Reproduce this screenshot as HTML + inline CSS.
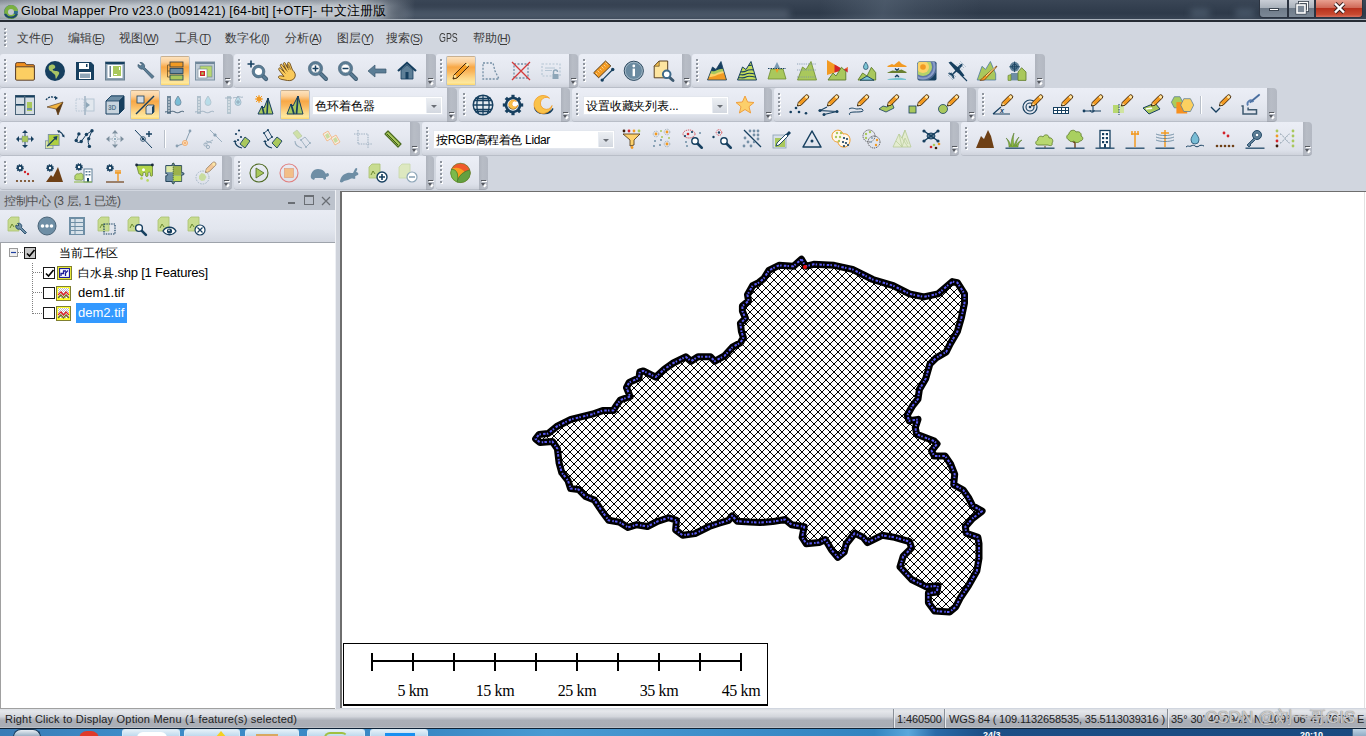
<!DOCTYPE html>
<html><head><meta charset="utf-8"><title>Global Mapper</title>
<style>
*{box-sizing:border-box;margin:0;padding:0}
html,body{width:1366px;height:736px;overflow:hidden}
body{position:relative;background:#d1d6df;font-family:"Liberation Sans",sans-serif;font-size:12px;color:#000}
.abs{position:absolute}
#title{position:absolute;left:0;top:0;width:1366px;height:22px;background:linear-gradient(#3a4656,#2e3a4a 60%,#3c4858)}
#title .glow{position:absolute;left:0;top:0;width:415px;height:20px;background:linear-gradient(90deg,#a9b0b8 0,#bcc2c9 6%,#c0c6cd 50%,#bac0c7 86%,rgba(150,158,168,.7) 93%,rgba(60,72,86,0) 100%)}
#title .glow:after{content:"";position:absolute;left:0;top:0;right:0;bottom:0;background:linear-gradient(rgba(60,70,84,.35),rgba(60,70,84,0) 30%,rgba(60,70,84,0) 80%,rgba(60,70,84,.2))}
#title .blur{position:absolute;top:3px;height:14px;background:rgba(120,140,160,.35);filter:blur(3px);border-radius:4px}
#title .hl{position:absolute;left:0;top:19px;width:1366px;height:1px;background:#aab2bc}
#title .dk{position:absolute;left:0;top:20px;width:1366px;height:2px;background:#262c34}
#title .t{position:absolute;left:21px;top:3px;font-size:12.5px;letter-spacing:0.16px;color:#000;white-space:nowrap;text-shadow:0 0 6px #dfe4ea}
#title .logo{position:absolute;left:2px;top:2px}
.wbtn{position:absolute;top:0;height:18px;border:1px solid #2b3340;border-top:none}
#menu{position:absolute;left:0;top:22px;width:1366px;height:32px;background:#d1d6df}
#menu span{position:absolute;top:8px;font-size:12px;color:#3b3b3b;white-space:nowrap}
#menu s{text-decoration:none;font-size:11px;letter-spacing:-0.88px}
#menu u{text-decoration:none;border-bottom:1px solid #3b3b3b}
.tb{position:absolute;background:linear-gradient(#ebeef6,#e6e9f1 40%,#dde1ea 85%,#cfd3dc);border-radius:3px 0 0 3px;border-bottom:1px solid #b9bec8}
.chev{position:absolute;background:linear-gradient(90deg,#aeb3bd,#b8bdc6 40%,#b3b8c2);border-radius:0 4px 4px 0;border-bottom:1px solid #a2a7b1}
.chev i{position:absolute;left:2px;top:24px;width:5px;height:1px;background:#55595f;box-shadow:1px 1px 0 #fff}
.chev b{position:absolute;left:2px;top:27px;width:0;height:0;border-left:2.5px solid transparent;border-right:2.5px solid transparent;border-top:3px solid #55595f}
.chev s{position:absolute;left:5px;top:28px;width:1.5px;height:3px;background:#fff;transform:rotate(40deg)}
.act{position:absolute;width:30px;height:30px;border:1px solid #b9c2cc;border-top-color:#c8b090;border-radius:2px;background:linear-gradient(#fde2bc,#fbd09a 18%,#f8a846 36%,#f9b65c 52%,#fcd88a 76%,#fde89e 92%,#fdd56a)}
.ic{position:absolute;overflow:visible}
.sep{position:absolute;width:2px;height:18px;border-left:1px solid #b9c0ca;border-right:1px solid #fff}
.combo{position:absolute;background:#fff;border:1px solid #e3e7ee}
.combo span{position:absolute;left:2px;top:1px;font-size:12px;color:#000;white-space:nowrap}
.combo .dd{position:absolute;right:1px;top:1px;width:15px;height:calc(100% - 2px);background:linear-gradient(#eceff3,#d3d8e0);border-left:1px solid #e8ecf2}
.combo .dd i{position:absolute;left:4px;top:7px;border-left:3.5px solid transparent;border-right:3.5px solid transparent;border-top:3.5px solid #6a6f76}
#panelhdr{position:absolute;left:0;top:191px;width:335px;height:19px;background:#bcc2cc}
#panelhdr .t{position:absolute;left:4px;top:2px;font-size:12px;letter-spacing:-0.34px;color:#505050;white-space:nowrap}
#paneltb{position:absolute;left:0;top:210px;width:335px;height:33px;background:linear-gradient(#e9ecf4,#e2e6ee 60%,#d4d8e1);border-bottom:1px solid #9ea3ab}
#tree{position:absolute;left:0;top:243px;width:335px;height:466px;background:#fff;border-left:1px solid #a0a0a0;border-bottom:1px solid #a0a0a0}
#tree .t{position:absolute;font-size:13px;white-space:nowrap;color:#000}
.cb{position:absolute;width:12px;height:12px;border:1px solid #1a1a1a;background:#fff}
#split{position:absolute;left:335px;top:190px;width:5px;height:519px;background:#cfd3db;border-left:1px solid #eef0f4}
#map{position:absolute;left:340px;top:191px;width:1026px;height:517px;background:#fff;border-left:2px solid #6e6e6e;border-top:1px solid #6e6e6e;overflow:hidden}
#map:after{content:"";position:absolute;right:1px;top:0;width:1px;height:100%;background:#e2e2e2}
#status{position:absolute;left:0;top:709px;width:1366px;height:19px;background:linear-gradient(#dcdfe4,#e5e7eb 12%,#d2d5db 40%,#bcc0c8 50%,#abafb7 60%,#a9adb5 92%,#c6cad0)}
#status span{position:absolute;top:4px;font-size:11px;color:#222;white-space:nowrap}
#status .dv{position:absolute;top:0;width:2px;height:19px;border-left:1px solid #8a9098;border-right:1px solid #e8eaee}
#taskbar{position:absolute;left:0;top:728px;width:1366px;height:8px;background:linear-gradient(90deg,#3a7cb6 0,#3e8cc8 9%,#3a88c4 31%,#4a9ad2 40%,#3c8cc8 55%,#3384c0 64%,#5aa8dc 66.5%,#2a6aa8 68.5%,#1c4e86 72%,#1a4a80 100%);border-top:1px solid #0e2236}
.tbtn{position:absolute;top:0;height:8px;border:1px solid #d8eaf6;border-bottom:none;border-radius:3px 3px 0 0;background:linear-gradient(#e4f0f8,#b8d6ec)}
.grip{position:absolute;width:2px;height:2px;background:#8f959e;box-shadow:0 4px 0 #8f959e,0 8px 0 #8f959e,0 12px 0 #8f959e,0 16px 0 #8f959e,0 20px 0 #8f959e,1px 1px 0 #fff,1px 5px 0 #fff,1px 9px 0 #fff,1px 13px 0 #fff,1px 17px 0 #fff,1px 21px 0 #fff}
.grip5{position:absolute;width:2px;height:2px;background:#8f959e;box-shadow:0 4px 0 #8f959e,0 8px 0 #8f959e,0 12px 0 #8f959e,0 16px 0 #8f959e,1px 1px 0 #fff,1px 5px 0 #fff,1px 9px 0 #fff,1px 13px 0 #fff,1px 17px 0 #fff}

</style></head><body>
<div id="title">
  <div class="blur" style="left:400px;width:390px;top:10px;height:8px;background:rgba(140,155,172,.35)"></div>
  <div style="position:absolute;left:820px;top:0;width:160px;height:20px;background:linear-gradient(100deg,rgba(90,105,122,0) 0,rgba(90,105,122,.55) 40%,rgba(90,105,122,.3) 60%,rgba(90,105,122,0) 100%)"></div>
  <div class="blur" style="left:1190px;width:20px;top:9px;height:8px"></div>
  <div class="blur" style="left:1235px;width:20px;top:9px;height:8px"></div>
  <div class="glow"></div>
  <svg class="logo" width="18" height="18" viewBox="0 0 18 18"><circle cx="9" cy="10" r="7" fill="#2d6a8a"/><path d="M15 6a7 7 0 1 0 1 6H9V9h7c0-1-.3-2-1-3z" fill="#7ab040"/><path d="M3 12c2 4 9 5 12 0" stroke="#1e4a6a" stroke-width="2" fill="none"/><circle cx="9" cy="10" r="3" fill="#c3c9d0"/></svg>
  <div class="t">Global Mapper Pro v23.0 (b091421) [64-bit] [+OTF]- 中文注册版</div>
  <div class="hl"></div><div class="dk"></div>
  <div class="wbtn" style="left:1259px;width:29px;border-radius:0 0 0 4px;background:linear-gradient(#c9ced6,#aab2bc 45%,#6e7a88 50%,#7c8896)"><div style="position:absolute;left:9px;top:8px;width:10px;height:3px;background:#fff;border:1px solid #3a4450"></div></div>
  <div class="wbtn" style="left:1288px;width:27px;background:linear-gradient(#c9ced6,#aab2bc 45%,#6e7a88 50%,#7c8896)"><svg style="position:absolute;left:6px;top:1px" width="14" height="14"><rect x="4.5" y="1.5" width="8" height="8" fill="none" stroke="#3a4450" stroke-width="3"/><rect x="4.5" y="1.5" width="8" height="8" fill="none" stroke="#fff" stroke-width="1.3"/><rect x="2" y="4" width="8" height="8" fill="#7c8896" stroke="#3a4450" stroke-width="3"/><rect x="2" y="4" width="8" height="8" fill="#7c8896" stroke="#fff" stroke-width="1.6"/></svg></div>
  <div class="wbtn" style="left:1315px;width:48px;border-radius:0 0 4px 0;background:linear-gradient(#e8a090,#d06a58 45%,#b8321e 50%,#c84a30 85%,#d87060)"><svg style="position:absolute;left:17px;top:2px" width="13" height="12"><path d="M2 1.5l9 9M11 1.5l-9 9" stroke="#3a2020" stroke-width="4.2"/><path d="M2 1.5l9 9M11 1.5l-9 9" stroke="#fff" stroke-width="2.4"/></svg></div>
</div>
<div id="menu">
  <div class="grip5" style="left:4px;top:6px"></div>
  <span style="left:17px">文件<s>(<u>F</u>)</s></span>
  <span style="left:68px">编辑<s>(<u>E</u>)</s></span>
  <span style="left:119px">视图<s>(<u>W</u>)</s></span>
  <span style="left:175px">工具<s>(<u>T</u>)</s></span>
  <span style="left:225px">数字化<s>(<u>I</u>)</s></span>
  <span style="left:285px">分析<s>(<u>A</u>)</s></span>
  <span style="left:337px">图层<s>(<u>Y</u>)</s></span>
  <span style="left:386px">搜索<s>(<u>S</u>)</s></span>
  <span style="left:439px;top:9px;transform:scaleX(0.74);transform-origin:0 0">GPS</span>
  <span style="left:473px">帮助<s>(<u>H</u>)</s></span>
</div>
<div class="tb" style="left:0px;top:54px;width:223px;height:34px"></div><div class="chev" style="left:223px;top:54px;width:10px;height:34px"><i></i><b></b><s></s></div><div class="grip" style="left:4px;top:59px"></div>
<div class="act" style="left:160px;top:56px"></div>
<svg class="ic" style="left:15.0px;top:61.0px" width="20" height="20" viewBox="0 0 20 20"><path d="M0.6 18V3.2Q0.6 1.6 2.2 1.6H10l1.4 2.1h6.8q1.2 0 1.2 1.2V18z" fill="#f2901e" stroke="#5a4030" stroke-width="1"/><rect x="0.6" y="5.8" width="18.8" height="13.4" rx="1.2" fill="#fcce62" stroke="#5a4030" stroke-width="1"/></svg>
<svg class="ic" style="left:45.0px;top:61.0px" width="20" height="20" viewBox="0 0 20 20"><circle cx="10" cy="10" r="10" fill="#163f5f"/><path d="M4 5c2-2 5-2 6 0 1 2-1 3-2 3-1 1 1 2 3 2s4 1 3 3c-1 2-2 3-3 5-1-2 0-4-2-5-2-1-2-3-4-3-1-1-2-3-1-5z" fill="#a8c464"/></svg>
<svg class="ic" style="left:75.0px;top:61.0px" width="20" height="20" viewBox="0 0 20 20"><path d="M1 1h15l3 3v15H1z" fill="#163f5f"/><rect x="4" y="2" width="10" height="6" fill="#fff"/><rect x="11" y="3" width="1.5" height="3" fill="#163f5f"/><rect x="4" y="11" width="12" height="7" fill="#fff"/><rect x="5" y="12.5" width="10" height="4.5" fill="#8fa6b8"/></svg>
<svg class="ic" style="left:105.0px;top:61.0px" width="20" height="20" viewBox="0 0 20 20"><rect x="0.5" y="1" width="19" height="18" fill="#8aa0b2" stroke="#6a8090"/><rect x="0.5" y="1" width="19" height="2" fill="#163f5f"/><rect x="2.5" y="4" width="15" height="13" fill="#fff"/><rect x="4.5" y="5" width="1.5" height="11" fill="#6a8090"/><rect x="8" y="5" width="8" height="10" fill="#a9c85c"/><rect x="14" y="6" width="1" height="3" fill="#fff"/><rect x="9" y="13" width="3" height="1" fill="#fff"/></svg>
<svg class="ic" style="left:135.0px;top:61.0px" width="20" height="20" viewBox="0 0 20 20"><path d="M3 3.5a4 4 0 0 0 5 4.5l9 9.5 2-2-9.5-9A4 4 0 0 0 5 1.5l2 2-1.5 1.5z" fill="#5b7d95" stroke="#3e5a70" stroke-width="0.8"/></svg>
<svg class="ic" style="left:165.0px;top:61.0px" width="20" height="20" viewBox="0 0 20 20"><path d="M2.5 4v12M2.5 4H5M2.5 10H5M2.5 16H5" stroke="#6a5020" stroke-width="0.8" fill="none"/><rect x="5" y="1" width="13" height="5" fill="#f29a22" stroke="#2a3a4a" stroke-width="0.8"/><rect x="5" y="7.5" width="13" height="5" fill="#6e8ea5" stroke="#163f5f" stroke-width="0.8"/><rect x="5" y="14" width="13" height="5" fill="#a9c85c" stroke="#163f5f" stroke-width="0.8"/></svg>
<svg class="ic" style="left:195.0px;top:61.0px" width="20" height="20" viewBox="0 0 20 20"><rect x="0.5" y="1" width="19" height="18" fill="#c0ccd6" stroke="#7a90a2"/><rect x="0.5" y="1" width="19" height="2" fill="#6f879a"/><rect x="5" y="5" width="12" height="11" fill="#b8d870" stroke="#6a8090" stroke-width=".6"/><rect x="3" y="8" width="9" height="9" fill="#fff" stroke="#6a8090" stroke-width=".6"/><rect x="5" y="10" width="5" height="5" fill="#d2232a"/><rect x="6.3" y="11.3" width="2.4" height="2.4" fill="#a9c85c"/></svg>
<div class="tb" style="left:234px;top:54px;width:192px;height:34px"></div><div class="chev" style="left:426px;top:54px;width:10px;height:34px"><i></i><b></b><s></s></div><div class="grip" style="left:238px;top:59px"></div>
<svg class="ic" style="left:247.0px;top:61.0px" width="20" height="20" viewBox="0 0 20 20"><path d="M0.5 3h7M4 -.5v7" stroke="#163f5f" stroke-width="1.6"/><path d="M15 14l4 4" stroke="#3e5a70" stroke-width="4.2" stroke-linecap="round"/><path d="M15 14l4 4" stroke="#5b7d95" stroke-width="2.6" stroke-linecap="round"/><circle cx="11.5" cy="10.5" r="5" fill="#fff" stroke="#5b7d95" stroke-width="2.8"/><circle cx="11.5" cy="10.5" r="6.4" fill="none" stroke="#3e5a70" stroke-width=".6"/></svg>
<svg class="ic" style="left:277.0px;top:61.0px" width="20" height="20" viewBox="0 0 20 20"><path d="M1.5 16.5C1 15 3 14.5 5 15l2 .5L2 9C1 7.5 2.5 6 4 7.5l3 3L3.5 5C2.5 3.5 4.5 2.5 5.5 4L9 8.5 6.5 3C6 1.5 8 1 8.5 2.5L11 7 10.5 2.5C10.5 1 12.5 1 13 2.5L15.5 9C17.5 11 19 13 18 16c-1 3-4.5 4-7.5 3.5L5 18.5c-2-.5-3-1-3.5-2z" fill="#f9c95a" stroke="#6a4a18" stroke-width=".9"/><path d="M4.5 8.5l4 4M6 5l4.5 5.5M8.5 3.5l3.5 5.5M11.5 3.5l2 5" stroke="#6a4a18" stroke-width=".7"/></svg>
<svg class="ic" style="left:307.0px;top:61.0px" width="20" height="20" viewBox="0 0 20 20"><path d="M14 13l5 5" stroke="#3e5a70" stroke-width="4" stroke-linecap="round"/><path d="M14 13l5 5" stroke="#5b7d95" stroke-width="2.4" stroke-linecap="round"/><circle cx="8.5" cy="7.5" r="5.8" fill="#fff" stroke="#5b7d95" stroke-width="2.6"/><circle cx="8.5" cy="7.5" r="7.1" fill="none" stroke="#3e5a70" stroke-width=".6"/><circle cx="8.5" cy="7.5" r="4.3" fill="none" stroke="#3e5a70" stroke-width=".5"/><path d="M5.5 7.5h6M8.5 4.5v6" stroke="#163f5f" stroke-width="1.5"/></svg>
<svg class="ic" style="left:337.0px;top:61.0px" width="20" height="20" viewBox="0 0 20 20"><path d="M14 13l5 5" stroke="#3e5a70" stroke-width="4" stroke-linecap="round"/><path d="M14 13l5 5" stroke="#5b7d95" stroke-width="2.4" stroke-linecap="round"/><circle cx="8.5" cy="7.5" r="5.8" fill="#fff" stroke="#5b7d95" stroke-width="2.6"/><circle cx="8.5" cy="7.5" r="7.1" fill="none" stroke="#3e5a70" stroke-width=".6"/><circle cx="8.5" cy="7.5" r="4.3" fill="none" stroke="#3e5a70" stroke-width=".5"/><path d="M5.5 7.5h6" stroke="#163f5f" stroke-width="1.5"/></svg>
<svg class="ic" style="left:367.0px;top:61.0px" width="20" height="20" viewBox="0 0 20 20"><path d="M1 10l7-6v4h11v4H8v4z" fill="#5b7d95" stroke="#3e5a70" stroke-width="0.7"/></svg>
<svg class="ic" style="left:397.0px;top:61.0px" width="20" height="20" viewBox="0 0 20 20"><path d="M1 10L10 2l9 8" stroke="#163f5f" stroke-width="2.2" fill="none"/><path d="M4 9l6-5 6 5v9H4z" fill="#5e7f97" stroke="#163f5f" stroke-width=".8"/><rect x="8.5" y="11" width="3" height="7" fill="#163f5f"/></svg>
<div class="tb" style="left:436px;top:54px;width:133px;height:34px"></div><div class="chev" style="left:569px;top:54px;width:9px;height:34px"><i></i><b></b><s></s></div><div class="grip" style="left:440px;top:59px"></div>
<div class="act" style="left:446px;top:56px"></div>
<svg class="ic" style="left:451.0px;top:61.0px" width="20" height="20" viewBox="0 0 20 20"><path d="M15 2l3 3L6 17l-4 1 1-4z" fill="#f29a22" stroke="#2a1a08" stroke-width="0.9"/><circle cx="16.3" cy="3.7" r="1.8" fill="#fbe39a"/><circle cx="4" cy="15.5" r="1.4" fill="#fbe39a"/></svg>
<svg class="ic" style="left:481.0px;top:61.0px" width="20" height="20" viewBox="0 0 20 20"><path d="M2 2h10l2 8 4 8H2z" fill="none" stroke="#7590a6" stroke-width="1.3" stroke-dasharray="2 1.5"/></svg>
<svg class="ic" style="left:511.0px;top:61.0px" width="20" height="20" viewBox="0 0 20 20"><rect x="3" y="3" width="14" height="14" fill="none" stroke="#7590a6" stroke-width="1.3" stroke-dasharray="2 1.5"/><path d="M1 1l18 18M19 1L1 19" stroke="#d43a3a" stroke-width="1.3"/></svg>
<svg class="ic" style="left:541.0px;top:61.0px" width="20" height="20" viewBox="0 0 20 20"><rect x="1" y="3" width="18" height="12" fill="none" stroke="#b6c6d4" stroke-width="1.2" stroke-dasharray="2 1.5"/><path d="M4 7h10M4 9.5h7" stroke="#b6c6d4" stroke-width="1"/><rect x="11.5" y="13" width="6" height="5" fill="#8ea6b8"/><path d="M12.5 13v-2a2 2 0 0 1 4 0" stroke="#8ea6b8" stroke-width="1.4" fill="none"/></svg>
<div class="tb" style="left:579px;top:54px;width:103px;height:34px"></div><div class="chev" style="left:682px;top:54px;width:9px;height:34px"><i></i><b></b><s></s></div><div class="grip" style="left:583px;top:59px"></div>
<svg class="ic" style="left:593.0px;top:61.0px" width="20" height="20" viewBox="0 0 20 20"><path d="M0.6 11.8L12.5 0l5.3 4.9L5.6 16.8z" fill="#f29a22" stroke="#4a3010" stroke-width=".9" stroke-linejoin="round"/><path d="M4.5 13.5l-1.5-1.5M6.5 11.5l-2-2M8.5 9.5l-1.5-1.5M10.5 7.5l-2-2M12.5 5.5l-1.5-1.5M14.5 3.5l-2-2" stroke="#fde0b0" stroke-width=".8"/><path d="M9.2 19.1L19.7 8.5" stroke="#163f5f" stroke-width="1.2"/><circle cx="9.2" cy="19.1" r="1.7" fill="#163f5f"/><circle cx="19.7" cy="8.5" r="1.7" fill="#163f5f"/></svg>
<svg class="ic" style="left:623.0px;top:61.0px" width="20" height="20" viewBox="0 0 20 20"><circle cx="10.8" cy="9.8" r="9.6" fill="#6a8aa0" stroke="#2e4a60" stroke-width="1"/><circle cx="10.8" cy="9.8" r="8.6" fill="none" stroke="#d8e2ea" stroke-width=".5"/><rect x="9.6" y="7.6" width="2.4" height="7.6" fill="#fff"/><circle cx="10.8" cy="5" r="1.4" fill="#fff"/></svg>
<svg class="ic" style="left:653.0px;top:61.0px" width="20" height="20" viewBox="0 0 20 20"><path d="M1.2 5.2L6.2 0H14.7V16.8H1.2z" fill="#fde5a0" stroke="#4a3010" stroke-width=".9"/><path d="M1.2 5.2h5V0z" fill="#f2c050" stroke="#4a3010" stroke-width=".6"/><path d="M16.5 16.3l3.5 3.2" stroke="#3e5a70" stroke-width="3" stroke-linecap="round"/><circle cx="13.7" cy="13.3" r="3.8" fill="#fff" stroke="#3e6a8a" stroke-width="2"/></svg>
<div class="tb" style="left:692px;top:54px;width:343px;height:34px"></div><div class="chev" style="left:1035px;top:54px;width:10px;height:34px"><i></i><b></b><s></s></div><div class="grip" style="left:696px;top:59px"></div>
<svg class="ic" style="left:707.0px;top:61.0px" width="20" height="20" viewBox="0 0 20 20"><clipPath id="c_t1"><path d="M0.5 19L5.5 6L9 8.5L14 0.5L19.5 19Z"/></clipPath><path d="M0.5 19L5.5 6L9 8.5L14 0.5L19.5 19Z" fill="#163f5f"/><g clip-path="url(#c_t1)"><path d="M0 10c3-1 5 1 8 0s5-3 12-2v12H0z" fill="#a9c85c"/><path d="M0 12c3-1 5 2 8 1s5-3 12-3v10H0z" fill="#fcd36a"/><path d="M0 16c3 0 5 0 8-1s5-3 12-3v8H0z" fill="#f29a22"/></g><path d="M0.5 19L5.5 6L9 8.5L14 0.5L19.5 19Z" fill="none" stroke="#163f5f" stroke-width=".8"/></svg>
<svg class="ic" style="left:737.0px;top:61.0px" width="20" height="20" viewBox="0 0 20 20"><clipPath id="c_t2"><path d="M0.5 19L5.5 6L9 8.5L14 0.5L19.5 19Z"/></clipPath><path d="M0.5 19L5.5 6L9 8.5L14 0.5L19.5 19Z" fill="#c4dc5a"/><g clip-path="url(#c_t2)" stroke="#163f5f" fill="none" stroke-width="1.1"><path d="M0 11c3-1 6 1 9-1s6-1 11-1"/><path d="M0 14c3-1 6 1 9-1s6 0 11 0"/><path d="M0 17c3-1 6 1 9-1s6 0 11 0"/><path d="M10 4c2 0 3 1 5 0"/></g><path d="M0.5 19L5.5 6L9 8.5L14 0.5L19.5 19Z" fill="none" stroke="#163f5f" stroke-width="1"/></svg>
<svg class="ic" style="left:767.0px;top:61.0px" width="20" height="20" viewBox="0 0 20 20"><path d="M1 18l3-10h12l3 10z" fill="#a9c85c" stroke="#6c8a30" stroke-width=".8"/><path d="M10 1l3 6H7z" fill="#7b9bb2"/><path d="M1 7.5h18" stroke="#163f5f" stroke-width="1" stroke-dasharray="1.5 1"/><path d="M8 8l2 4 2-4z" fill="#f29a22"/></svg>
<svg class="ic" style="left:797.0px;top:61.0px" width="20" height="20" viewBox="0 0 20 20"><path d="M0.5 19L5.5 6L9 8.5L14 0.5L19.5 19Z" fill="#a9c85c" stroke="#6c8a30" stroke-width=".8"/><path d="M0 3h19M0 9h19M0 16h19" stroke="#7a92a8" stroke-width=".8" stroke-dasharray="1.2 1"/></svg>
<svg class="ic" style="left:827.0px;top:61.0px" width="20" height="20" viewBox="0 0 20 20"><path d="M0 -1L16.5 8.8 0 14z" fill="#f29a22"/><path d="M7.5 3.5L16.5 8.8 7.5 11.5z" fill="#d2232a"/><path d="M16.5 8.8L20.7 6v5.6z" fill="#d2232a"/><path d="M20.7 6v1.5l-2.5 1.3z" fill="#f29a22"/><path d="M1 19L6 12l3 3 5.5-8.7 4.3 4.1V19z" fill="#a9c85c" stroke="#5d7a2a" stroke-width=".9" stroke-linejoin="round"/></svg>
<svg class="ic" style="left:857.0px;top:61.0px" width="20" height="20" viewBox="0 0 20 20"><path d="M1 19L5.6 12 10 15l4.4-8.7 4.3 5.3V19z" fill="#a9c85c" stroke="#5d7a2a" stroke-width=".9" stroke-linejoin="round"/><path d="M3 19.2L10 15l7 4.2z" fill="#7cc4d4" stroke="#163f5f" stroke-width=".9"/><path d="M8.8 1c-1.2 2-2.3 3.5-2.3 5.2a2.3 2.3 0 0 0 4.6 0C11.1 4.5 10 3 8.8 1z" fill="#7cc4d4" stroke="#163f5f" stroke-width=".7"/></svg>
<svg class="ic" style="left:887.0px;top:61.0px" width="20" height="20" viewBox="0 0 20 20"><path d="M0.5 5L5 3l2 1 5-4 3 3 4.5 2v1H.5z" fill="#f29a22"/><path d="M8 7.5l2 1.8 2-1.8" stroke="#163f5f" stroke-width="1.3" fill="none"/><path d="M.5 11.5l5-2 4 .5 5-1.5 5 2.5v1H.5z" fill="#6a8030"/><path d="M8 16l2-1.8 2 1.8" stroke="#163f5f" stroke-width="1.3" fill="none"/><path d="M.5 18.5c3-1.5 6-1 8-1.5s6-.5 10.5 1v1H.5z" fill="#79c4d0"/></svg>
<svg class="ic" style="left:917.0px;top:61.0px" width="20" height="20" viewBox="0 0 20 20"><clipPath id="c_t8"><rect x="1" y="1" width="18" height="18" rx="1"/></clipPath><rect x="0.5" y="0.5" width="19" height="19" rx="1.8" fill="#163f5f"/><g clip-path="url(#c_t8)"><circle cx="6" cy="6" r="14" fill="#4a6890"/><circle cx="6" cy="6" r="12.5" fill="#8a9cc8"/><circle cx="6" cy="6" r="10.5" fill="#5e78a8"/><circle cx="6" cy="6" r="9" fill="#b4d26a"/><circle cx="6" cy="6" r="6" fill="#fcd36a"/><circle cx="6" cy="6" r="2.8" fill="#f29a22"/></g></svg>
<svg class="ic" style="left:947.0px;top:61.0px" width="20" height="20" viewBox="0 0 20 20"><path d="M1.5 1.5L4 .5l6.5 5.5 3-2.8c1.2-1 2.8.4 1.8 1.6L12.5 8l5 6.5-1.8 1-6.3-4.8-3 2.8 1 3.5-1.2.8-2-3-3-2 .8-1.2 3.5 1 2.8-3z" fill="#163f5f"/><path d="M13 13l7 7" stroke="#163f5f" stroke-width="1.1"/><path d="M10 3.5l5.5 5.5M12 2l5.5 5.5M13.5.5l5.5 5.5M4 11l5 5M2.5 12.5l5 5M1 14l5 5" stroke="#7a9ab0" stroke-width=".8" stroke-dasharray="1.1 .9"/></svg>
<svg class="ic" style="left:977.0px;top:61.0px" width="20" height="20" viewBox="0 0 20 20"><path d="M0.2 19L5 5.3l3.6 3.1L13.4 .5l5.3 12.3V19z" fill="#a9c85c" stroke="#4e7aa0" stroke-width=".8" stroke-linejoin="round"/><path d="M3 19.5l3-3 12.8-10.8 1.2-.7-.7 1.2L7.5 19z" fill="#f29a22" stroke="#6a3a10" stroke-width=".7"/><path d="M9 15l9-8.5" stroke="#fbe7a8" stroke-width=".9"/></svg>
<svg class="ic" style="left:1007.0px;top:61.0px" width="20" height="20" viewBox="0 0 20 20"><circle cx="7.6" cy="5.8" r="4.8" fill="#5e7f97"/><path d="M7.6 0.5v10.6M2.3 5.8h10.6" stroke="#163f5f" stroke-width=".9"/><circle cx="7.6" cy="5.8" r="2.5" fill="none" stroke="#163f5f" stroke-width=".8"/><rect x="4" y="12" width="7" height="7.4" fill="#6e8ea5"/><path d="M11 19.4V11l3.6-4.3L19 11v8.4z" fill="#a9c85c" stroke="#5d7a2a" stroke-width=".8"/><path d="M1 19.4v-4.9l3-1v5.9z" fill="#a9c85c" stroke="#5d7a2a" stroke-width=".6"/></svg>
<div class="tb" style="left:0px;top:88px;width:447px;height:34px"></div><div class="chev" style="left:447px;top:88px;width:10px;height:34px"><i></i><b></b><s></s></div><div class="grip" style="left:4px;top:93px"></div>
<div class="act" style="left:130px;top:90px"></div>
<div class="act" style="left:280px;top:90px"></div>
<svg class="ic" style="left:15.0px;top:95.0px" width="20" height="20" viewBox="0 0 20 20"><rect x="0.5" y="0.5" width="19" height="19" fill="#d5dde4" stroke="#4a6478"/><rect x="0.5" y="0.5" width="19" height="2" fill="#163f5f"/><rect x="9" y="1" width="1.4" height="18" fill="#4a6478"/><rect x="1" y="9" width="8" height="1.6" fill="#163f5f"/><rect x="12" y="7" width="5" height="9" fill="#a9c85c"/><rect x="12" y="13" width="5" height="2" fill="#6e8ea5"/></svg>
<svg class="ic" style="left:45.0px;top:95.0px" width="20" height="20" viewBox="0 0 20 20"><path d="M2 12l16-5-5 13-2-6z" fill="#f2b542" stroke="#4a2a10" stroke-width=".6"/><path d="M11 14l7-7-5 13z" fill="#5a3a18"/><path d="M1 5c2-3 6-4 10-2" stroke="#163f5f" stroke-width="1.3" fill="none" stroke-dasharray="2 1"/><path d="M10 1l3 2-3 2z" fill="#163f5f"/></svg>
<svg class="ic" style="left:75.0px;top:95.0px" width="20" height="20" viewBox="0 0 20 20"><rect x="1" y="4" width="8" height="12" fill="none" stroke="#b6c6d4" stroke-dasharray="1.5 1.2"/><rect x="11" y="4" width="8" height="12" fill="#e2e8ee" stroke="#b6c6d4"/><path d="M10 1v19" stroke="#9db0c0" stroke-width="1.4"/><path d="M11 7l4 3-4 3z" fill="#8ea6b8"/></svg>
<svg class="ic" style="left:105.0px;top:95.0px" width="20" height="20" viewBox="0 0 20 20"><path d="M1 6l5-5h13v13l-5 5H1z" fill="#c8d4de" stroke="#163f5f" stroke-width="1"/><path d="M1 6l5-5h13l-5 5z" fill="#6e8ea5" stroke="#163f5f" stroke-width=".8"/><path d="M14 6l5-5v13l-5 5z" fill="#163f5f"/><text x="3" y="15" font-size="6.5" font-family="Liberation Sans" font-weight="bold" fill="#5a7a90">3D</text></svg>
<svg class="ic" style="left:135.0px;top:95.0px" width="20" height="20" viewBox="0 0 20 20"><rect x="2" y="1" width="7" height="7" fill="#d5dde4" stroke="#163f5f" stroke-width=".8"/><path d="M1 19L19 1" stroke="#163f5f" stroke-width="1.4"/><path d="M11 12l2-2h6v7l-2 2h-6z" fill="#d5dde4" stroke="#163f5f" stroke-width=".8"/><path d="M17 12l2-2v7l-2 2z" fill="#163f5f"/></svg>
<svg class="ic" style="left:165.0px;top:95.0px" width="20" height="20" viewBox="0 0 20 20"><rect x="2" y="1" width="4" height="18" fill="#6f879a" /><path d="M3 4h2M3 7h2M3 10h2M3 13h2M3 16h2" stroke="#fff" stroke-width=".8"/><path d="M13 1c-2 3-3 5-3 6.5a3 3 0 0 0 6 0C16 6 15 4 13 1z" fill="#79bdd6" stroke="#6f879a" stroke-width=".8"/><path d="M0 17c2-1 3 1 5 0s3-1 5 0 3 1 5 0 3-1 4 0" stroke="#3e5a70" stroke-width="1" fill="none"/></svg>
<svg class="ic" style="left:195.0px;top:95.0px" width="20" height="20" viewBox="0 0 20 20"><rect x="2" y="1" width="4" height="18" fill="#b0c0cc" /><path d="M3 4h2M3 7h2M3 10h2M3 13h2M3 16h2" stroke="#fff" stroke-width=".8"/><path d="M13 1c-2 3-3 5-3 6.5a3 3 0 0 0 6 0C16 6 15 4 13 1z" fill="#b8dce8" stroke="#b0c0cc" stroke-width=".8"/><path d="M0 17c2-1 3 1 5 0s3-1 5 0 3 1 5 0 3-1 4 0" stroke="#9db0c0" stroke-width="1" fill="none"/></svg>
<svg class="ic" style="left:225.0px;top:95.0px" width="20" height="20" viewBox="0 0 20 20"><rect x="2" y="1" width="4" height="18" fill="#b6c6d0"/><path d="M3 4h2M3 7h2M3 10h2M3 13h2M3 16h2" stroke="#fff" stroke-width=".8"/><path d="M13 1c-2 3-3 5-3 6.5a3 3 0 0 0 6 0C16 6 15 4 13 1z" fill="#b8dce8" stroke="#9db0c0" stroke-width=".8"/><path d="M0 3h7M8 3c2-1 3 0 5-1s3 1 5 0" stroke="#9db0c0" stroke-width=".9" fill="none"/><path d="M13 5v4M11 7h4" stroke="#8ea6b8"/></svg>
<svg class="ic" style="left:255.0px;top:95.0px" width="20" height="20" viewBox="0 0 20 20"><circle cx="4" cy="4" r="2.5" fill="#f29a22"/><path d="M4 0v8M0 4h8M1 1l6 6M7 1L1 7" stroke="#f29a22" stroke-width="1"/><path d="M3 19l4-8 2 2 4-10 5 16z" fill="#a9c85c" stroke="#163f5f" stroke-width="1"/><path d="M7 11l2 8M13 3l-1 16" stroke="#163f5f" stroke-width="1.6"/></svg>
<svg class="ic" style="left:285.0px;top:95.0px" width="20" height="20" viewBox="0 0 20 20"><path d="M2 19l4-10 2 2 5-10 5 18z" fill="#a9c85c" stroke="#163f5f" stroke-width="1"/><path d="M6 9l3 10M13 1l-1.5 18" stroke="#163f5f" stroke-width="1.8"/></svg>
<div class="combo" style="left:312px;top:96px;width:131px;height:19px"><span style="letter-spacing:0px">色环着色器</span><div class="dd"><i></i></div></div>
<div class="tb" style="left:459px;top:88px;width:102px;height:34px"></div><div class="chev" style="left:561px;top:88px;width:9px;height:34px"><i></i><b></b><s></s></div><div class="grip" style="left:463px;top:93px"></div>
<svg class="ic" style="left:473.0px;top:95.0px" width="20" height="20" viewBox="0 0 20 20"><circle cx="10" cy="10" r="9.8" fill="#e4ebf1" stroke="#163f5f" stroke-width="1.4"/><path d="M10 .5v19M1 5.5h18M.5 10h19M1 14.5h18M5.5 1.5c-2 5-2 12 0 17M14.5 1.5c2 5 2 12 0 17M2 3.5h16M2 16.5h16" stroke="#163f5f" stroke-width="1.3" fill="none"/></svg>
<svg class="ic" style="left:503.0px;top:95.0px" width="20" height="20" viewBox="0 0 20 20"><rect x="8.4" y="-.2" width="3.2" height="4" fill="#163f5f" transform="rotate(0 10 10)"/><rect x="8.4" y="-.2" width="3.2" height="4" fill="#163f5f" transform="rotate(45 10 10)"/><rect x="8.4" y="-.2" width="3.2" height="4" fill="#163f5f" transform="rotate(90 10 10)"/><rect x="8.4" y="-.2" width="3.2" height="4" fill="#163f5f" transform="rotate(135 10 10)"/><rect x="8.4" y="-.2" width="3.2" height="4" fill="#163f5f" transform="rotate(180 10 10)"/><rect x="8.4" y="-.2" width="3.2" height="4" fill="#163f5f" transform="rotate(225 10 10)"/><rect x="8.4" y="-.2" width="3.2" height="4" fill="#163f5f" transform="rotate(270 10 10)"/><rect x="8.4" y="-.2" width="3.2" height="4" fill="#163f5f" transform="rotate(315 10 10)"/><circle cx="10" cy="10" r="7" fill="#fff" stroke="#163f5f" stroke-width="2.6"/><path d="M5 11c1 4.5 9 4.5 10 0-2 2.5-8 2.5-10 0z" fill="#163f5f"/><g transform="translate(5.2 4.8) scale(.5)"><path d="M16.5 3.2A9 9 0 1 0 19 10.5A6 6 0 1 1 16.5 3.2Z" fill="#f9c24a" stroke="#f29a22" stroke-width="1.4"/></g></svg>
<svg class="ic" style="left:533.0px;top:95.0px" width="20" height="20" viewBox="0 0 20 20"><path d="M1.5 12c1.5 8 15.5 9 18.5 1.5-3 5.5-15 6-18.5-1.5z" fill="#163f5f" stroke="#163f5f" stroke-width="1.4"/><path d="M16.5 3.2A9 9 0 1 0 19 10.5A6 6 0 1 1 16.5 3.2Z" fill="#f9c24a" stroke="#f29a22" stroke-width=".8"/></svg>
<div class="tb" style="left:572px;top:88px;width:192px;height:34px"></div><div class="chev" style="left:764px;top:88px;width:8px;height:34px"><i></i><b></b><s></s></div><div class="grip" style="left:576px;top:93px"></div>
<div class="combo" style="left:583px;top:96px;width:146px;height:19px"><span style="letter-spacing:-0.15px">设置收藏夹列表...</span><div class="dd"><i></i></div></div>
<svg class="ic" style="left:735.0px;top:95.0px" width="20" height="20" viewBox="0 0 20 20"><path d="M10 1l2.6 6 6.4.5-5 4.2 1.6 6.3L10 14.5 4.4 18l1.6-6.3-5-4.2 6.4-.5z" fill="#fccf6a" stroke="#f0a040" stroke-width="1"/></svg>
<div class="tb" style="left:774px;top:88px;width:193px;height:34px"></div><div class="chev" style="left:967px;top:88px;width:9px;height:34px"><i></i><b></b><s></s></div><div class="grip" style="left:778px;top:93px"></div>
<svg class="ic" style="left:788.0px;top:95.0px" width="20" height="20" viewBox="0 0 20 20"><circle cx="2.7" cy="17" r="1.3" fill="#163f5f"/><circle cx="8" cy="13" r="1.3" fill="#163f5f"/><circle cx="11" cy="17" r="1.3" fill="#163f5f"/><circle cx="18" cy="18.3" r="1.3" fill="#163f5f"/><g transform="translate(9.5,11) rotate(-45)"><path d="M0 0L3.2 -2H13A2 2 0 0 1 13 2H3.2Z" fill="#f29a22" stroke="#3a2408" stroke-width=".9"/><path d="M.6 0L3.2 -1.5V1.5Z" fill="#f6dc9a"/><circle cx="12.8" cy="0" r="1.5" fill="#fbe7a8"/><path d="M0 0L1.2 -.8V.8Z" fill="#3a2408"/></g></svg>
<svg class="ic" style="left:818.0px;top:95.0px" width="20" height="20" viewBox="0 0 20 20"><path d="M9 12L2 15.5 19 16.5 6 19.5" stroke="#163f5f" stroke-width="1.1" fill="none"/><circle cx="2" cy="15.5" r="1.5" fill="#163f5f"/><circle cx="6" cy="19.5" r="1.5" fill="#163f5f"/><circle cx="19" cy="16.5" r="1.5" fill="#163f5f"/><g transform="translate(9.5,11) rotate(-45)"><path d="M0 0L3.2 -2H13A2 2 0 0 1 13 2H3.2Z" fill="#f29a22" stroke="#3a2408" stroke-width=".9"/><path d="M.6 0L3.2 -1.5V1.5Z" fill="#f6dc9a"/><circle cx="12.8" cy="0" r="1.5" fill="#fbe7a8"/><path d="M0 0L1.2 -.8V.8Z" fill="#3a2408"/></g></svg>
<svg class="ic" style="left:848.0px;top:95.0px" width="20" height="20" viewBox="0 0 20 20"><path d="M1 14c3-2 6 0 8 0s5-1 6 1-4 2-8 2-7 1-5 3" stroke="#163f5f" stroke-width="1" fill="none"/><g transform="translate(9.5,11) rotate(-45)"><path d="M0 0L3.2 -2H13A2 2 0 0 1 13 2H3.2Z" fill="#f29a22" stroke="#3a2408" stroke-width=".9"/><path d="M.6 0L3.2 -1.5V1.5Z" fill="#f6dc9a"/><circle cx="12.8" cy="0" r="1.5" fill="#fbe7a8"/><path d="M0 0L1.2 -.8V.8Z" fill="#3a2408"/></g></svg>
<svg class="ic" style="left:878.0px;top:95.0px" width="20" height="20" viewBox="0 0 20 20"><path d="M1 14l7 3 8-4-2-5-5 4-4-1z" fill="#a9c85c" stroke="#163f5f" stroke-width=".8"/><g transform="translate(9.5,11) rotate(-45)"><path d="M0 0L3.2 -2H13A2 2 0 0 1 13 2H3.2Z" fill="#f29a22" stroke="#3a2408" stroke-width=".9"/><path d="M.6 0L3.2 -1.5V1.5Z" fill="#f6dc9a"/><circle cx="12.8" cy="0" r="1.5" fill="#fbe7a8"/><path d="M0 0L1.2 -.8V.8Z" fill="#3a2408"/></g></svg>
<svg class="ic" style="left:908.0px;top:95.0px" width="20" height="20" viewBox="0 0 20 20"><rect x="1" y="11" width="7" height="7" fill="#a9c85c" stroke="#163f5f" stroke-width=".8"/><g transform="translate(9.5,11) rotate(-45)"><path d="M0 0L3.2 -2H13A2 2 0 0 1 13 2H3.2Z" fill="#f29a22" stroke="#3a2408" stroke-width=".9"/><path d="M.6 0L3.2 -1.5V1.5Z" fill="#f6dc9a"/><circle cx="12.8" cy="0" r="1.5" fill="#fbe7a8"/><path d="M0 0L1.2 -.8V.8Z" fill="#3a2408"/></g></svg>
<svg class="ic" style="left:938.0px;top:95.0px" width="20" height="20" viewBox="0 0 20 20"><circle cx="5" cy="14" r="4.5" fill="#a9c85c" stroke="#163f5f" stroke-width=".8"/><g transform="translate(9.5,11) rotate(-45)"><path d="M0 0L3.2 -2H13A2 2 0 0 1 13 2H3.2Z" fill="#f29a22" stroke="#3a2408" stroke-width=".9"/><path d="M.6 0L3.2 -1.5V1.5Z" fill="#f6dc9a"/><circle cx="12.8" cy="0" r="1.5" fill="#fbe7a8"/><path d="M0 0L1.2 -.8V.8Z" fill="#3a2408"/></g></svg>
<div class="tb" style="left:978px;top:88px;width:289px;height:34px"></div><div class="chev" style="left:1267px;top:88px;width:10px;height:34px"><i></i><b></b><s></s></div><div class="grip" style="left:982px;top:93px"></div>
<svg class="ic" style="left:992.0px;top:95.0px" width="20" height="20" viewBox="0 0 20 20"><path d="M1 19L9 12M1 19h17" stroke="#163f5f" stroke-width="1.2" fill="none"/><text x="8" y="18" font-size="7" font-style="italic" font-weight="bold" font-family="Liberation Sans" fill="#163f5f">x</text><g transform="translate(9.5,11) rotate(-45)"><path d="M0 0L3.2 -2H13A2 2 0 0 1 13 2H3.2Z" fill="#f29a22" stroke="#3a2408" stroke-width=".9"/><path d="M.6 0L3.2 -1.5V1.5Z" fill="#f6dc9a"/><circle cx="12.8" cy="0" r="1.5" fill="#fbe7a8"/><path d="M0 0L1.2 -.8V.8Z" fill="#3a2408"/></g></svg>
<svg class="ic" style="left:1022.0px;top:95.0px" width="20" height="20" viewBox="0 0 20 20"><circle cx="8" cy="12" r="7" fill="none" stroke="#163f5f" stroke-width="1.2"/><circle cx="8" cy="12" r="4" fill="none" stroke="#163f5f" stroke-width="1.1"/><circle cx="8" cy="12" r="1.3" fill="#163f5f"/><g transform="translate(9.5,11) rotate(-45)"><path d="M0 0L3.2 -2H13A2 2 0 0 1 13 2H3.2Z" fill="#f29a22" stroke="#3a2408" stroke-width=".9"/><path d="M.6 0L3.2 -1.5V1.5Z" fill="#f6dc9a"/><circle cx="12.8" cy="0" r="1.5" fill="#fbe7a8"/><path d="M0 0L1.2 -.8V.8Z" fill="#3a2408"/></g></svg>
<svg class="ic" style="left:1052.0px;top:95.0px" width="20" height="20" viewBox="0 0 20 20"><rect x="1" y="12" width="16" height="7" fill="#163f5f"/><path d="M2 13h3v2H2zM6 13h3v2H6zM10 13h3v2h-3zM14 13h2v2h-2zM2 16h3v2H2zM6 16h3v2H6zM10 16h3v2h-3zM14 16h2v2h-2z" fill="#fff"/><g transform="translate(9.5,11) rotate(-45)"><path d="M0 0L3.2 -2H13A2 2 0 0 1 13 2H3.2Z" fill="#f29a22" stroke="#3a2408" stroke-width=".9"/><path d="M.6 0L3.2 -1.5V1.5Z" fill="#f6dc9a"/><circle cx="12.8" cy="0" r="1.5" fill="#fbe7a8"/><path d="M0 0L1.2 -.8V.8Z" fill="#3a2408"/></g></svg>
<svg class="ic" style="left:1082.0px;top:95.0px" width="20" height="20" viewBox="0 0 20 20"><path d="M1 16h18M11 11v6" stroke="#163f5f" stroke-width="1.1"/><circle cx="2" cy="16" r="1.4" fill="#163f5f"/><path d="M8 15c0 3 5 3 4 0" stroke="#163f5f" fill="none"/><g transform="translate(9.5,11) rotate(-45)"><path d="M0 0L3.2 -2H13A2 2 0 0 1 13 2H3.2Z" fill="#f29a22" stroke="#3a2408" stroke-width=".9"/><path d="M.6 0L3.2 -1.5V1.5Z" fill="#f6dc9a"/><circle cx="12.8" cy="0" r="1.5" fill="#fbe7a8"/><path d="M0 0L1.2 -.8V.8Z" fill="#3a2408"/></g></svg>
<svg class="ic" style="left:1112.0px;top:95.0px" width="20" height="20" viewBox="0 0 20 20"><rect x="1" y="10" width="6" height="8" fill="#b8d870"/><rect x="8" y="10" width="4" height="8" fill="#d0e4a0"/><path d="M7 9v11" stroke="#163f5f" stroke-width="1" stroke-dasharray="1.5 1"/><g transform="translate(9.5,11) rotate(-45)"><path d="M0 0L3.2 -2H13A2 2 0 0 1 13 2H3.2Z" fill="#f29a22" stroke="#3a2408" stroke-width=".9"/><path d="M.6 0L3.2 -1.5V1.5Z" fill="#f6dc9a"/><circle cx="12.8" cy="0" r="1.5" fill="#fbe7a8"/><path d="M0 0L1.2 -.8V.8Z" fill="#3a2408"/></g></svg>
<svg class="ic" style="left:1142.0px;top:95.0px" width="20" height="20" viewBox="0 0 20 20"><path d="M1 13l12-5 5 6-11 5z" fill="#a9c85c" stroke="#163f5f" stroke-width="1"/><path d="M4 14c2-1 4 0 6-1" stroke="#fff" stroke-width="1.4"/><g transform="translate(9.5,11) rotate(-45)"><path d="M0 0L3.2 -2H13A2 2 0 0 1 13 2H3.2Z" fill="#f29a22" stroke="#3a2408" stroke-width=".9"/><path d="M.6 0L3.2 -1.5V1.5Z" fill="#f6dc9a"/><circle cx="12.8" cy="0" r="1.5" fill="#fbe7a8"/><path d="M0 0L1.2 -.8V.8Z" fill="#3a2408"/></g></svg>
<svg class="ic" style="left:1172.0px;top:95.0px" width="20" height="20" viewBox="0 0 20 20"><path d="M2.3 1.7h5.6l3 5.5-3 5.6H2.3L-.6 7.2z" fill="#a9cc5c" stroke="#5e7f97" stroke-width=".8"/><rect x="4.4" y="7.1" width="10.8" height="11.4" fill="#f7901e"/><path d="M11.8 3.7h6.6l3.3 6.4-3.3 6.4h-6.6l-3.1-6.4z" fill="#fcd060" stroke="#5e7f97" stroke-width=".8"/></svg>
<div class="sep" style="left:1200px;top:96px"></div>
<svg class="ic" style="left:1210.0px;top:95.0px" width="20" height="20" viewBox="0 0 20 20"><path d="M1 12l5 5 4-4" stroke="#163f5f" stroke-width="1.3" fill="none"/><g transform="translate(9.5,11) rotate(-45)"><path d="M0 0L3.2 -2H13A2 2 0 0 1 13 2H3.2Z" fill="#f29a22" stroke="#3a2408" stroke-width=".9"/><path d="M.6 0L3.2 -1.5V1.5Z" fill="#f6dc9a"/><circle cx="12.8" cy="0" r="1.5" fill="#fbe7a8"/><path d="M0 0L1.2 -.8V.8Z" fill="#3a2408"/></g></svg>
<svg class="ic" style="left:1240.0px;top:95.0px" width="20" height="20" viewBox="0 0 20 20"><path d="M1.4 11.1H3v7.8h13.5v-4.1H8.1v-2.3" stroke="#3e5a70" stroke-width="1.5" fill="none"/><path d="M10.5 7l8.5-7" stroke="#5b7fb0" stroke-width="2.2" stroke-linecap="round"/><path d="M8 10.5a3.2 3.2 0 0 1 1-4.5 3.2 3.2 0 0 1 4.3 1" stroke="#5b7fb0" stroke-width="2" fill="none"/><path d="M10.5 7l8.5-7" stroke="#2a4a70" stroke-width=".5"/></svg>
<div class="tb" style="left:0px;top:122px;width:410px;height:34px"></div><div class="chev" style="left:410px;top:122px;width:10px;height:34px"><i></i><b></b><s></s></div><div class="grip" style="left:4px;top:127px"></div>
<svg class="ic" style="left:15.0px;top:129.0px" width="20" height="20" viewBox="0 0 20 20"><path d="M10 1l3 3h-6zM10 19l3-3h-6zM1 10l3-3v6zM19 10l-3-3v6z" fill="#163f5f"/><path d="M10 3v14M3 10h14" stroke="#163f5f" stroke-width="1"/><rect x="7" y="7" width="6" height="6" fill="#a9c85c" stroke="#6a8090" stroke-width=".7" stroke-dasharray="1 .7"/></svg>
<svg class="ic" style="left:45.0px;top:129.0px" width="20" height="20" viewBox="0 0 20 20"><rect x="0.5" y="11.8" width="7.5" height="7.8" fill="#dce8a0" stroke="#7a90a2" stroke-width=".8"/><rect x="3.3" y="5.5" width="10.8" height="10.9" fill="#b0d040" stroke="#7a90a2" stroke-width=".9"/><path d="M2.2 17.2L11.5 8" stroke="#163f5f" stroke-width="1.2"/><path d="M12.5 7l-4.5 1 3.5 3.5z" fill="#163f5f"/><path d="M13.5 2.3c2.5.8 4.2 2.5 5 5" stroke="#163f5f" stroke-width="1.1" fill="none"/><path d="M12 1.2l3.2.3-1.6 2.6zM19.6 8.6l-.4-3.2-2.6 1.6z" fill="#163f5f"/></svg>
<svg class="ic" style="left:74.0px;top:129.0px" width="20" height="20" viewBox="0 0 20 20"><path d="M4.9 4.9L2.2 11.5C3 14 5.5 14 7.2 12.5L12.4 5.5 18 1.6 14.7 9.8C13.5 12 14.5 15 15.4 17.4" stroke="#163f5f" stroke-width="1" fill="none"/><g fill="#163f5f"><circle cx="4.9" cy="4.9" r="1.7"/><circle cx="2.2" cy="11.5" r="1.7"/><circle cx="7.2" cy="12.5" r="1.7"/><circle cx="12.4" cy="5.5" r="1.7"/><circle cx="18" cy="1.8" r="1.7"/><circle cx="14.7" cy="9.8" r="1.7"/><circle cx="15.4" cy="17.4" r="1.7"/></g></svg>
<svg class="ic" style="left:105.0px;top:129.0px" width="20" height="20" viewBox="0 0 20 20"><path d="M10 1l3 3.5h-6zM10 19l3-3.5h-6zM1 10l3.5-3v6zM19 10l-3.5-3v6z" fill="#7d8f9e"/><path d="M10 4v12M4 10h12" stroke="#a8b8c4" stroke-width="1.1"/><circle cx="10" cy="10" r="2.6" fill="#e8ecf2" stroke="#9aaab8" stroke-width=".8" stroke-dasharray="1.2 .8"/><circle cx="10" cy="10" r="1" fill="#7d9aae"/></svg>
<svg class="ic" style="left:134.0px;top:129.0px" width="20" height="20" viewBox="0 0 20 20"><path d="M1 1l17 18" stroke="#163f5f" stroke-width="1"/><circle cx="9" cy="10" r="2.4" fill="none" stroke="#163f5f" stroke-width=".8"/><circle cx="9" cy="10" r="1.2" fill="#163f5f"/><path d="M15 2v6M12 5h6" stroke="#163f5f" stroke-width="1.4"/></svg>
<div class="sep" style="left:164px;top:130px"></div>
<svg class="ic" style="left:175.0px;top:129.0px" width="20" height="20" viewBox="0 0 20 20"><path d="M2 17l8-3 5-12" stroke="#8aa0b2" stroke-width="1" fill="none"/><circle cx="2" cy="17" r="1.4" fill="#8aa0b2"/><circle cx="15" cy="2" r="1.4" fill="#8aa0b2"/><circle cx="10" cy="14" r="2.6" fill="#fbd8b0" stroke="#f0a868" stroke-width=".8"/><circle cx="10" cy="14" r="1" fill="#f0a868"/></svg>
<svg class="ic" style="left:203.0px;top:129.0px" width="20" height="20" viewBox="0 0 20 20"><path d="M7 1l12 12" stroke="#9db0c0" stroke-width="1"/><circle cx="12" cy="6" r="1.6" fill="#8aa0b2" stroke="#b6c6d4" stroke-dasharray="1 .6"/><path d="M2 15l8-4M3 12l6 2" stroke="#9db0c0" stroke-width=".9"/><circle cx="2.5" cy="15.5" r="1.6" fill="none" stroke="#9db0c0"/><circle cx="5" cy="18" r="1.6" fill="none" stroke="#9db0c0"/></svg>
<svg class="ic" style="left:232.0px;top:129.0px" width="20" height="20" viewBox="0 0 20 20"><circle cx="4" cy="5" r="1.1" fill="#163f5f"/><circle cx="7" cy="1.5" r="1.1" fill="#163f5f"/><circle cx="9" cy="8" r="1.1" fill="#163f5f"/><circle cx="6" cy="11" r="1.1" fill="#163f5f"/><path d="M8 15l5-7 5 4-5 7z" fill="#a9c85c" stroke="#163f5f" stroke-width=".9"/><path d="M3 12c0 4 3 6 7 7" stroke="#163f5f" stroke-width="1.2" fill="none"/><path d="M1 13l2-2 2 2z" fill="#163f5f"/></svg>
<svg class="ic" style="left:262.0px;top:129.0px" width="20" height="20" viewBox="0 0 20 20"><path d="M2 4l4-3 4 7-4 3z" fill="none" stroke="#163f5f" stroke-width=".9"/><circle cx="2" cy="4" r="1" fill="#163f5f"/><circle cx="6" cy="1" r="1" fill="#163f5f"/><circle cx="10" cy="8" r="1" fill="#163f5f"/><circle cx="6" cy="11" r="1" fill="#163f5f"/><path d="M10 14l5-6 5 4-5 7z" fill="#a9c85c" stroke="#163f5f" stroke-width=".9"/><path d="M3 12c0 4 3 6 7 7" stroke="#163f5f" stroke-width="1.2" fill="none"/><path d="M1 13l2-2 2 2z" fill="#163f5f"/></svg>
<svg class="ic" style="left:292.0px;top:129.0px" width="20" height="20" viewBox="0 0 20 20"><path d="M1 4l4-3 5 6-4 3z" fill="#cfe0a8" stroke="#b0c4a0" stroke-width=".6"/><path d="M9 11l4-3 5 6-4 4z" fill="none" stroke="#9db0c0" stroke-width=".9"/><circle cx="9" cy="11" r="1" fill="#9db0c0"/><circle cx="18" cy="14" r="1" fill="#9db0c0"/><circle cx="14" cy="18" r="1" fill="#9db0c0"/><path d="M3 12c0 4 3 6 7 7" stroke="#9db0c0" stroke-width="1.1" fill="none"/></svg>
<svg class="ic" style="left:322.0px;top:129.0px" width="20" height="20" viewBox="0 0 20 20"><path d="M1 5l5-3 4 7-5 3z" fill="#f8ece0" stroke="#f0b888" stroke-width=".9"/><path d="M9 9l5-3 4 7-5 3z" fill="#f8ece0" stroke="#f0b888" stroke-width=".9"/><path d="M3 6l3-2 2 4-3 2zM11 10l3-2 2 4-3 2z" fill="#c8dca0"/></svg>
<svg class="ic" style="left:353.0px;top:129.0px" width="20" height="20" viewBox="0 0 20 20"><path d="M5 1v14h14M1 5h14v14" stroke="#9db0c0" stroke-width="1.1" fill="none" stroke-dasharray="1.4 1"/></svg>
<svg class="ic" style="left:383.0px;top:129.0px" width="20" height="20" viewBox="0 0 20 20"><path d="M2 5l3-3 13 13-3 3z" fill="#a9c85c" stroke="#4a6a20" stroke-width="1.2" stroke-linejoin="round"/><path d="M4 5l11 11" stroke="#3a5a18" stroke-width="1"/></svg>
<div class="tb" style="left:422px;top:122px;width:528px;height:34px"></div><div class="chev" style="left:950px;top:122px;width:9px;height:34px"><i></i><b></b><s></s></div><div class="grip" style="left:426px;top:127px"></div>
<div class="combo" style="left:433px;top:130px;width:182px;height:19px"><span style="letter-spacing:-0.36px">按RGB/高程着色 Lidar</span><div class="dd"><i></i></div></div>
<svg class="ic" style="left:622.0px;top:129.0px" width="20" height="20" viewBox="0 0 20 20"><circle cx="2" cy="2" r="1.4" fill="#3a1a08"/><circle cx="7" cy="2" r="1.4" fill="#d2232a"/><circle cx="12" cy="2" r="1.4" fill="#f29a22"/><circle cx="17" cy="2" r="1.4" fill="#a9c85c"/><path d="M1 5h17l-6 6v5l-4 1v-6z" fill="#fdd26e" stroke="#4a3010" stroke-width=".8"/><circle cx="10" cy="18.5" r="1.4" fill="#f29a22"/></svg>
<svg class="ic" style="left:652.0px;top:129.0px" width="20" height="20" viewBox="0 0 20 20"><circle cx="4" cy="5" r="2.8" fill="none" stroke="#6a8090" stroke-width=".6" stroke-dasharray="1 .8"/><circle cx="4" cy="5" r="1.4" fill="#f29a22"/><circle cx="15" cy="3" r="2.8" fill="none" stroke="#6a8090" stroke-width=".6" stroke-dasharray="1 .8"/><circle cx="15" cy="3" r="1.4" fill="#f29a22"/><circle cx="15" cy="15" r="2.8" fill="none" stroke="#6a8090" stroke-width=".6" stroke-dasharray="1 .8"/><circle cx="15" cy="15" r="1.4" fill="#f29a22"/><circle cx="9" cy="2" r="1" fill="#a9c85c"/><circle cx="10" cy="8" r="1" fill="#a9c85c"/><circle cx="17" cy="9" r="1" fill="#a9c85c"/><circle cx="3" cy="12" r="1" fill="#6e8ea5"/><circle cx="9" cy="11" r="1" fill="#6e8ea5"/><circle cx="2" cy="17" r="1" fill="#6e8ea5"/><circle cx="8" cy="16" r="1" fill="#6e8ea5"/></svg>
<svg class="ic" style="left:682.0px;top:129.0px" width="20" height="20" viewBox="0 0 20 20"><ellipse cx="7" cy="5" rx="6" ry="4" fill="none" stroke="#d2232a" stroke-width=".8" stroke-dasharray="1.2 .8"/><circle cx="6" cy="5" r="1.3" fill="#d2232a"/><circle cx="3" cy="7" r="1.1" fill="#163f5f"/><circle cx="10" cy="3" r="1.1" fill="#163f5f"/><circle cx="18" cy="4" r="1" fill="#6e8ea5"/><circle cx="4" cy="13" r="1" fill="#6e8ea5"/><circle cx="5" cy="17" r="1" fill="#6e8ea5"/><line x1="15.24" y1="14.24" x2="19.740000000000002" y2="18.740000000000002" stroke="#163f5f" stroke-width="2.6" stroke-linecap="round"/><circle cx="13" cy="12" r="3.2" fill="#fff" stroke="#163f5f" stroke-width="1.4"/></svg>
<svg class="ic" style="left:712.0px;top:129.0px" width="20" height="20" viewBox="0 0 20 20"><circle cx="7" cy="3.5" r="2.8" fill="none" stroke="#d2232a" stroke-width=".8" stroke-dasharray="1.2 .8"/><circle cx="7" cy="3.5" r="1.2" fill="#163f5f"/><circle cx="1.5" cy="8" r="1.2" fill="#163f5f"/><line x1="14.24" y1="14.24" x2="18.740000000000002" y2="18.740000000000002" stroke="#163f5f" stroke-width="2.6" stroke-linecap="round"/><circle cx="12" cy="12" r="3.2" fill="#fff" stroke="#163f5f" stroke-width="1.4"/></svg>
<svg class="ic" style="left:742.0px;top:129.0px" width="20" height="20" viewBox="0 0 20 20"><path d="M2 1l17 17" stroke="#163f5f" stroke-width="1.2"/><g fill="#7590a6"><circle cx="8" cy="2" r="1.4"/><circle cx="12" cy="2" r="1.4"/><circle cx="16" cy="2" r="1.4"/><circle cx="12" cy="6" r="1.4"/><circle cx="16" cy="6" r="1.4"/><circle cx="16" cy="10" r="1.4"/><circle cx="3" cy="9" r="1.4"/><circle cx="6" cy="13" r="1.4"/><circle cx="2" cy="17" r="1.4"/><circle cx="9" cy="17" r="1.4"/><circle cx="12" cy="13" r="1.2"/></g></svg>
<svg class="ic" style="left:772.0px;top:129.0px" width="20" height="20" viewBox="0 0 20 20"><rect x="1" y="6" width="13" height="13" fill="#d8e0e8" stroke="#8aa0b2" stroke-width=".8"/><rect x="3" y="9" width="10" height="9" fill="#a9c85c"/><path d="M5 14l9-9 2 2-9 9-3 1z" fill="#fff" stroke="#163f5f" stroke-width=".9"/><path d="M14 5l3-3 2 2-3 3z" fill="#163f5f"/></svg>
<svg class="ic" style="left:802.0px;top:129.0px" width="20" height="20" viewBox="0 0 20 20"><path d="M10 2L19 18H1z" fill="none" stroke="#163f5f" stroke-width="1.5" stroke-linejoin="round"/><circle cx="10" cy="12" r="1.5" fill="#163f5f"/></svg>
<svg class="ic" style="left:832.0px;top:129.0px" width="20" height="20" viewBox="0 0 20 20"><path d="M3 2c4-2 7 0 8 3 4-1 7 2 7 6s-3 8-7 7c-3 0-5-3-5-5-4 0-6-3-6-6 0-2 1-4 3-5z" fill="#fff8ee" stroke="#f29a22" stroke-width="1"/><g fill="#a9c85c"><circle cx="5" cy="4" r="1.2"/><circle cx="9" cy="4" r="1.2"/><circle cx="4" cy="8" r="1.2"/><circle cx="8" cy="8" r="1.2"/><circle cx="7" cy="12" r="1.2"/></g><g fill="#163f5f"><circle cx="12" cy="9" r="1.1"/><circle cx="15" cy="10" r="1.1"/><circle cx="11" cy="13" r="1.1"/><circle cx="14" cy="14" r="1.1"/><circle cx="12" cy="17" r="1.1"/><circle cx="16" cy="16" r="1.1"/></g></svg>
<svg class="ic" style="left:862.0px;top:129.0px" width="20" height="20" viewBox="0 0 20 20"><circle cx="7" cy="7" r="6" fill="none" stroke="#333" stroke-width=".8" stroke-dasharray="1.2 .8"/><circle cx="12" cy="13" r="6" fill="none" stroke="#333" stroke-width=".8" stroke-dasharray="1.2 .8"/><g fill="#a9c85c"><circle cx="4" cy="5" r="1.2"/><circle cx="8" cy="3" r="1.2"/><circle cx="4" cy="9" r="1.2"/></g><g fill="#8ea6b8"><circle cx="10" cy="9" r="1.1"/><circle cx="9" cy="13" r="1.1"/></g><g fill="#f29a22"><circle cx="15" cy="11" r="1.2"/><circle cx="14" cy="16" r="1.2"/></g></svg>
<svg class="ic" style="left:892.0px;top:129.0px" width="20" height="20" viewBox="0 0 20 20"><path d="M1 18L7 5l3 4 3-8 6 17z" fill="#e4ecd0" stroke="#b8cc98" stroke-width=".8"/><path d="M4 12l6 6 3-9 3 6M7 5l3 13M13 1l-3 8 6 9" stroke="#b8cc98" stroke-width=".7" fill="none"/></svg>
<svg class="ic" style="left:922.0px;top:129.0px" width="20" height="20" viewBox="0 0 20 20"><ellipse cx="9" cy="7" rx="4" ry="3" fill="#5e7f97" stroke="#163f5f"/><path d="M2 2l14 10M16 2L2 12" stroke="#163f5f" stroke-width="1.5"/><circle cx="2" cy="2" r="1.6" fill="#163f5f"/><circle cx="16" cy="2" r="1.6" fill="#163f5f"/><circle cx="2" cy="12" r="1.6" fill="#163f5f"/><circle cx="16" cy="12" r="1.6" fill="#163f5f"/><circle cx="12" cy="16" r="1.3" fill="#a9c85c"/><circle cx="17" cy="15" r="1.3" fill="#f29a22"/><circle cx="9" cy="18" r="1.3" fill="#d2232a"/><circle cx="14" cy="19" r="1.3" fill="#3a1a08"/></svg>
<div class="tb" style="left:961px;top:122px;width:342px;height:34px"></div><div class="chev" style="left:1303px;top:122px;width:9px;height:34px"><i></i><b></b><s></s></div><div class="grip" style="left:965px;top:127px"></div>
<svg class="ic" style="left:975.0px;top:129.0px" width="20" height="20" viewBox="0 0 20 20"><path d="M1 19l5-12 3 3 4-9 3 6 3 12z" fill="#6e4016"/></svg>
<svg class="ic" style="left:1005.0px;top:129.0px" width="20" height="20" viewBox="0 0 20 20"><path d="M4 18c0-5-2-8-3-9 3 2 4 5 5 8 0-5 1-9 3-13 -1 4-1 9 0 13 1-4 3-7 5-9-2 3-3 6-3 9 1-3 3-5 6-6-3 2-4 5-4 7z" fill="#8ab840" stroke="#4a7020" stroke-width=".5"/><path d="M0.5 19.2h19" stroke="#2e5472" stroke-width="1.4"/></svg>
<svg class="ic" style="left:1035.0px;top:129.0px" width="20" height="20" viewBox="0 0 20 20"><path d="M3 16c-3 0-3-4 0-5-1-3 3-5 5-3 1-3 6-3 6 1 3-1 5 3 3 5 1 3-2 3-4 2H5z" fill="#b8d870" stroke="#5a7a2a" stroke-width=".8"/><path d="M10 17v2" stroke="#6e4016" stroke-width="1"/><path d="M0.5 19.2h19" stroke="#2e5472" stroke-width="1.4"/></svg>
<svg class="ic" style="left:1065.0px;top:129.0px" width="20" height="20" viewBox="0 0 20 20"><path d="M10 19v-7M10 14l-3-2M10 13l3-3" stroke="#6e4016" stroke-width="1.4"/><path d="M4 11c-3-1-3-5 0-6 0-4 6-5 7-2 3-1 6 1 5 4 3 1 2 5-1 5-1 2-5 2-6 0-2 1-4 1-5-1z" fill="#a9d060" stroke="#5a7a2a" stroke-width=".8"/><path d="M0.5 19.2h19" stroke="#2e5472" stroke-width="1.4"/></svg>
<svg class="ic" style="left:1095.0px;top:129.0px" width="20" height="20" viewBox="0 0 20 20"><rect x="5" y="1.5" width="10" height="17.5" fill="#fff" stroke="#163f5f" stroke-width="1.3"/><g fill="#163f5f"><rect x="7" y="4" width="2.2" height="2.2"/><rect x="10.8" y="4" width="2.2" height="2.2"/><rect x="7" y="8" width="2.2" height="2.2"/><rect x="10.8" y="8" width="2.2" height="2.2"/><rect x="7" y="12" width="2.2" height="2.2"/><rect x="10.8" y="12" width="2.2" height="2.2"/><rect x="9" y="15" width="2" height="4"/></g><path d="M0.5 19.2h19" stroke="#2e5472" stroke-width="1.4"/></svg>
<svg class="ic" style="left:1125.0px;top:129.0px" width="20" height="20" viewBox="0 0 20 20"><path d="M10 2v16M6 5h8M7 2v4M13 2v4" stroke="#f29a22" stroke-width="1.5"/><path d="M0.5 19.2h19" stroke="#2e5472" stroke-width="1.4"/></svg>
<svg class="ic" style="left:1155.0px;top:129.0px" width="20" height="20" viewBox="0 0 20 20"><path d="M10 1v17M6 4h8" stroke="#f29a22" stroke-width="1.5"/><path d="M1 5c4 2 14 2 18 0M1 8c4 2 14 2 18 0M1 11c4 2 14 2 18 0" stroke="#5b7d95" stroke-width=".8" fill="none"/><path d="M0.5 19.2h19" stroke="#2e5472" stroke-width="1.4"/></svg>
<svg class="ic" style="left:1185.0px;top:129.0px" width="20" height="20" viewBox="0 0 20 20"><path d="M10 3c-3 4-4 6-4 8a4 4 0 0 0 8 0c0-2-1-4-4-8z" fill="#79bdd6" stroke="#163f5f" stroke-width=".7"/><path d="M1 18c2-2 3 0 5-1s3-1 4 0 3 1 4 0 3-1 5 0" stroke="#163f5f" stroke-width="1" fill="none"/></svg>
<svg class="ic" style="left:1215.0px;top:129.0px" width="20" height="20" viewBox="0 0 20 20"><circle cx="9" cy="4" r="1.4" fill="#d2232a"/><circle cx="13" cy="7" r="1.4" fill="#d2232a"/><g fill="#6e4016"><circle cx="2" cy="17" r="1.3"/><circle cx="6" cy="17" r="1.3"/><circle cx="10" cy="17" r="1.3"/><circle cx="14" cy="17" r="1.3"/><circle cx="18" cy="17" r="1.3"/></g></svg>
<svg class="ic" style="left:1245.0px;top:129.0px" width="20" height="20" viewBox="0 0 20 20"><circle cx="12" cy="6" r="4.5" fill="#5e7f97" stroke="#163f5f" stroke-width=".9"/><circle cx="12" cy="6" r="1.8" fill="#fff" stroke="#163f5f" stroke-width=".6"/><path d="M9 9l-7 7 2 2 2-2-1-1 2-1 3-3" fill="#5e7f97" stroke="#163f5f" stroke-width=".8"/><path d="M0.5 19.2h19" stroke="#2e5472" stroke-width="1.4"/></svg>
<svg class="ic" style="left:1275.0px;top:129.0px" width="20" height="20" viewBox="0 0 20 20"><g fill="#a9c85c"><circle cx="2" cy="2" r="1.4"/><circle cx="18" cy="2" r="1.4"/><circle cx="18" cy="7" r="1.4"/><circle cx="18" cy="12" r="1.4"/><circle cx="18" cy="17" r="1.4"/></g><circle cx="2" cy="7" r="1.4" fill="#f29a22"/><circle cx="2" cy="12" r="1.4" fill="#d2232a"/><circle cx="2" cy="17" r="1.4" fill="#3a1a08"/><path d="M5 5c3 0 3 4 5 4s2-4 5-4M5 14c3 0 3-4 5-4s2 4 5 4" stroke="#6a8090" stroke-width=".8" fill="none" stroke-dasharray="1 .7"/></svg>
<div class="tb" style="left:0px;top:156px;width:222px;height:34px"></div><div class="chev" style="left:222px;top:156px;width:10px;height:34px"><i></i><b></b><s></s></div><div class="grip" style="left:4px;top:161px"></div>
<svg class="ic" style="left:15.0px;top:163.0px" width="20" height="20" viewBox="0 0 20 20"><circle cx="5" cy="5" r="3" fill="#163f5f" stroke="#163f5f" stroke-width="1.6" stroke-dasharray="1.2 .9"/><circle cx="5" cy="5" r="1.2000000000000002" fill="#fff"/><circle cx="10" cy="9" r="1.2" fill="#d2232a"/><circle cx="13" cy="11" r="1.2" fill="#d2232a"/><g fill="#6e4016"><circle cx="2" cy="18" r="1.1"/><circle cx="6" cy="18" r="1.1"/><circle cx="10" cy="18" r="1.1"/><circle cx="14" cy="18" r="1.1"/><circle cx="18" cy="18" r="1.1"/></g></svg>
<svg class="ic" style="left:45.0px;top:163.0px" width="20" height="20" viewBox="0 0 20 20"><circle cx="5" cy="5" r="3" fill="#163f5f" stroke="#163f5f" stroke-width="1.6" stroke-dasharray="1.2 .9"/><circle cx="5" cy="5" r="1.2000000000000002" fill="#fff"/><path d="M1 19l5-7 2 2 5-10 5 15z" fill="#6e4016"/></svg>
<svg class="ic" style="left:74.0px;top:163.0px" width="20" height="20" viewBox="0 0 20 20"><circle cx="5" cy="4" r="3" fill="#163f5f" stroke="#163f5f" stroke-width="1.6" stroke-dasharray="1.2 .9"/><circle cx="5" cy="4" r="1.2000000000000002" fill="#fff"/><rect x="10" y="6" width="8" height="13" fill="#fff" stroke="#5e7f97" stroke-width="1"/><g fill="#5e7f97"><rect x="11.5" y="8" width="2" height="1.5"/><rect x="14.5" y="8" width="2" height="1.5"/><rect x="11.5" y="11" width="2" height="1.5"/><rect x="14.5" y="11" width="2" height="1.5"/><rect x="13" y="15" width="2" height="4" fill="#163f5f"/></g><path d="M1 15c-1-3 2-5 4-4 2-2 5 0 4 3 1 2-1 4-3 3H3c-2 0-3-1-2-2z" fill="#b8d870" stroke="#5a7a2a" stroke-width=".6"/><path d="M0 19h18" stroke="#8ab840" stroke-width="1"/></svg>
<svg class="ic" style="left:105.0px;top:163.0px" width="20" height="20" viewBox="0 0 20 20"><circle cx="5" cy="5" r="3" fill="#163f5f" stroke="#163f5f" stroke-width="1.6" stroke-dasharray="1.2 .9"/><circle cx="5" cy="5" r="1.2000000000000002" fill="#fff"/><path d="M13 7v11M10 10h6M11 7v3M15 7v3" stroke="#f29a22" stroke-width="1.4"/><path d="M1 19h18" stroke="#6e4016" stroke-width="1.2"/></svg>
<svg class="ic" style="left:134.0px;top:163.0px" width="20" height="20" viewBox="0 0 20 20"><path d="M2.5 2h16v10.2c0 1.4-2.2 1.4-2.2 0V10c0-1.2-2.3-1.2-2.3 0v2.5c0 1.3-2.4 1.3-2.4 0V10.5c0-1.5-2.6-1.5-2.6 0v1.5c0 1.3-2.4 1.3-2.4 0v-.8c-1.5 0-2.1-.5-2.1-1.5z" fill="#b2d54a" stroke="#4a6420" stroke-width=".6"/><path d="M2.5 2h16" stroke="#163f5f" stroke-width="1.2"/><circle cx="2.6" cy="2" r="1.4" fill="#1a2a3a"/><circle cx="18.4" cy="2" r="1.4" fill="#1a2a3a"/><circle cx="9.5" cy="6.8" r="1.5" fill="#fff"/><circle cx="7.5" cy="15.4" r="1.4" fill="#b8d860"/><circle cx="13.6" cy="17.4" r="1.3" fill="#b8d860"/></svg>
<svg class="ic" style="left:164.0px;top:163.0px" width="20" height="20" viewBox="0 0 20 20"><path d="M1.8 2.6h6.4V1.4c0-1.6 2.2-1.6 2.2 0v1.2h7.2v7h1.2c1.6 0 1.6 2.4 0 2.4h-1.2v6.5h-7.2v1.1c0 1.6-2.2 1.6-2.2 0v-1.1H1.8v-5.8h1c1.1 0 1.1-2 0-2h-1z" fill="#6e8ea5" stroke="#1a3a50" stroke-width=".9"/><path d="M2.3 3.1h6.8v6.1H2.3z" fill="#dce8a4"/><path d="M9.3 3.1h8v8.9h-8z" fill="#9cb24a"/><path d="M9.3 12.4h8v5.8h-8z" fill="#bcd856"/><path d="M9.2 0v20.5" stroke="#4a6420" stroke-width=".8" stroke-dasharray="1.2 .8"/></svg>
<svg class="ic" style="left:195.0px;top:163.0px" width="20" height="20" viewBox="0 0 20 20"><circle cx="7.5" cy="14.5" r="6.5" fill="none" stroke="#9db0c0" stroke-width=".9" stroke-dasharray="1.6 1.1"/><path d="M4 13l2.5-3 3 1 2 3-2 3.5-3 .5-2.5-2z" fill="#c8dca0"/><g transform="translate(10.5,9.5) rotate(-45)"><path d="M0 0L3.2 -2H12A2 2 0 0 1 12 2H3.2Z" fill="#f4c898" stroke="#a08a70" stroke-width=".9"/><path d="M.6 0L3.2 -1.5V1.5Z" fill="#f6dc9a"/><circle cx="11.8" cy="0" r="1.5" fill="#fbe7a8"/><path d="M0 0L1.2 -.8V.8Z" fill="#a08a70"/></g></svg>
<div class="tb" style="left:234px;top:156px;width:192px;height:34px"></div><div class="chev" style="left:426px;top:156px;width:8px;height:34px"><i></i><b></b><s></s></div><div class="grip" style="left:238px;top:161px"></div>
<svg class="ic" style="left:249.0px;top:163.0px" width="20" height="20" viewBox="0 0 20 20"><circle cx="10" cy="10" r="9" fill="none" stroke="#4e6a22" stroke-width="1.1"/><path d="M7 5l8 5-8 5z" fill="#a9c85c" stroke="#4e6a22" stroke-width=".8"/></svg>
<svg class="ic" style="left:279.0px;top:163.0px" width="20" height="20" viewBox="0 0 20 20"><circle cx="10" cy="10" r="9" fill="none" stroke="#e08080" stroke-width="1.1"/><rect x="5.5" y="5.5" width="9" height="9" fill="#f2bf88" stroke="#e09878" stroke-width=".6"/></svg>
<svg class="ic" style="left:309.0px;top:163.0px" width="20" height="20" viewBox="0 0 20 20"><path d="M2 15c-1-4 2-9 7-9s7 3 8 5c1-2 3-1 3 1 0 1-2 2-3 2v2l-2 1-1-2H6l-1 2-2-1z" fill="#6e8ea5"/></svg>
<svg class="ic" style="left:339.0px;top:163.0px" width="20" height="20" viewBox="0 0 20 20"><path d="M1 19c0-3 2-7 5-8 3-2 6-1 8-1l2-4c1-2 3-1 2 1l-1 2c2 0 3 2 2 3-1 0-3 1-3 2 1 1 0 2-1 2-2-1-4 0-6 1l-4 1c-1 1-2 2-4 1z" fill="#6e8ea5"/></svg>
<svg class="ic" style="left:368.0px;top:163.0px" width="20" height="20" viewBox="0 0 20 20"><path d="M1 4l3-3h8v14H1z" fill="#c8dc90" stroke="#a8c070" stroke-width=".8"/><path d="M3 12l2-4 2 3" stroke="#6c8a30" stroke-width="1" fill="none"/><circle cx="14" cy="14" r="5" fill="#fff" stroke="#163f5f" stroke-width="1.4"/><path d="M11 14h6M14 11v6" stroke="#163f5f" stroke-width="1.6"/></svg>
<svg class="ic" style="left:398.0px;top:163.0px" width="20" height="20" viewBox="0 0 20 20"><path d="M1 4l3-3h8v14H1z" fill="#dde8c0" stroke="#c8d8a8" stroke-width=".8"/><circle cx="14" cy="14" r="5" fill="#fff" stroke="#8ea6b8" stroke-width="1.2"/><path d="M11 14h6" stroke="#8ea6b8" stroke-width="1.6"/></svg>
<div class="tb" style="left:436px;top:156px;width:43px;height:34px"></div><div class="chev" style="left:479px;top:156px;width:9px;height:34px"><i></i><b></b><s></s></div><div class="grip" style="left:440px;top:161px"></div>
<svg class="ic" style="left:450.0px;top:163.0px" width="20" height="20" viewBox="0 0 20 20"><clipPath id="c_ball"><circle cx="10.5" cy="9.9" r="10"/></clipPath><g clip-path="url(#c_ball)"><rect x="0" y="-1" width="21" height="22" fill="#f0592a"/><path d="M2 5.5Q9 3 14.5 8.5L7.5 17Z" fill="#f7a020"/><path d="M0 6.5Q6 5.5 7.5 11L8 21H0z" fill="#7cba4a" stroke="#3e7a28" stroke-width=".7"/><path d="M7.2 18Q10 9 21 6.5V21H7.2z" fill="#64a040" stroke="#3e7a28" stroke-width=".7"/></g><circle cx="10.5" cy="9.9" r="9.7" fill="none" stroke="#4a8a30" stroke-width=".6"/></svg>
<div id="panelhdr"><div class="t">控制中心 (3 层, 1 已选)</div>
  <div style="position:absolute;left:288px;top:11px;width:7px;height:2px;background:#6a6e74"></div>
  <div style="position:absolute;left:304px;top:4px;width:10px;height:10px;border:1px solid #6a6e74;border-top-width:2px"></div>
  <svg style="position:absolute;left:321px;top:5px" width="10" height="10"><path d="M1 1l8 8M9 1L1 9" stroke="#6a6e74" stroke-width="1.2"/></svg>
</div>
<div id="paneltb"><svg class="ic" style="left:7.0px;top:6.0px" width="20" height="20" viewBox="0 0 20 20"><path d="M1 4l3-3h8v14H1z" fill="#c8dc90" stroke="#a8c070" stroke-width=".8"/><path d="M3 12l2-4 2 3" stroke="#6c8a30" stroke-width="1" fill="none"/><path d="M9 9a3 3 0 0 0 4 4l5 5 1.5-1.5-5-5a3 3 0 0 0-4-4l1.5 1.5-1 1z" fill="#6e8ea5" stroke="#163f5f" stroke-width=".8"/></svg><svg class="ic" style="left:37.0px;top:6.0px" width="20" height="20" viewBox="0 0 20 20"><circle cx="10" cy="10" r="9" fill="#6e8ea5" stroke="#4a6478"/><circle cx="5.5" cy="10" r="1.8" fill="#fff"/><circle cx="10" cy="10" r="1.8" fill="#fff"/><circle cx="14.5" cy="10" r="1.8" fill="#fff"/></svg><svg class="ic" style="left:67.0px;top:6.0px" width="20" height="20" viewBox="0 0 20 20"><rect x="2" y="1" width="16" height="18" fill="#6e8ea5"/><path d="M4 3h12v3H4zM4 7h12v3H4zM4 11h12v3H4zM4 15h12v3H4z" fill="#d8e2ea"/><path d="M8 2v17" stroke="#6e8ea5" stroke-width="1"/></svg><svg class="ic" style="left:97.0px;top:6.0px" width="20" height="20" viewBox="0 0 20 20"><path d="M1 4l3-3h8v14H1z" fill="#c8dc90" stroke="#a8c070" stroke-width=".8"/><path d="M3 12l2-4 2 3" stroke="#6c8a30" stroke-width="1" fill="none"/><rect x="7" y="8" width="11" height="10" fill="none" stroke="#163f5f" stroke-width="1.2" stroke-dasharray="1.4 1"/></svg><svg class="ic" style="left:127.0px;top:6.0px" width="20" height="20" viewBox="0 0 20 20"><path d="M1 4l3-3h8v14H1z" fill="#c8dc90" stroke="#a8c070" stroke-width=".8"/><path d="M3 12l2-4 2 3" stroke="#6c8a30" stroke-width="1" fill="none"/><line x1="14.379999999999999" y1="14.379999999999999" x2="18.88" y2="18.88" stroke="#163f5f" stroke-width="2.6" stroke-linecap="round"/><circle cx="12" cy="12" r="3.4" fill="#fff" stroke="#163f5f" stroke-width="1.4"/></svg><svg class="ic" style="left:157.0px;top:6.0px" width="20" height="20" viewBox="0 0 20 20"><path d="M1 4l3-3h8v14H1z" fill="#c8dc90" stroke="#a8c070" stroke-width=".8"/><path d="M3 12l2-4 2 3" stroke="#6c8a30" stroke-width="1" fill="none"/><path d="M6 15c3-5 10-5 13 0-3 5-10 5-13 0z" fill="#fff" stroke="#163f5f" stroke-width="1.3"/><circle cx="12.5" cy="15" r="2.6" fill="#163f5f"/><circle cx="12" cy="14.2" r=".8" fill="#fff"/></svg><svg class="ic" style="left:187.0px;top:6.0px" width="20" height="20" viewBox="0 0 20 20"><path d="M1 4l3-3h8v14H1z" fill="#c8dc90" stroke="#a8c070" stroke-width=".8"/><path d="M3 12l2-4 2 3" stroke="#6c8a30" stroke-width="1" fill="none"/><circle cx="13" cy="14" r="5" fill="#fff" stroke="#163f5f" stroke-width="1.2"/><path d="M10.5 11.5l5 5M15.5 11.5l-5 5" stroke="#163f5f" stroke-width="1.2"/></svg></div>
<div id="tree">
  <svg style="position:absolute;left:0;top:0" width="335" height="100">
    <rect x="8.5" y="5.5" width="8" height="8" fill="#f0f0f0" stroke="#9a9a9a"/><path d="M10 9.5h5" stroke="#2040a0" stroke-width="1.2"/>
    <path d="M17 9.5h6" stroke="#808080" stroke-dasharray="1 1"/>
    <path d="M31.5 20v51M32 29.5h11M32 49.5h11M32 70.5h11" stroke="#808080" stroke-dasharray="1 1"/>
  </svg>
  <div class="cb" style="left:23px;top:4px;background:#c8c8c8"></div>
  <svg style="position:absolute;left:24px;top:5px" width="11" height="11"><path d="M2 5.5l2.5 2.5L9.5 2" stroke="#000" stroke-width="1.6" fill="none"/></svg>
  <div class="t" style="left:58px;top:2px;font-size:12px;letter-spacing:-0.16px">当前工作区</div>
  <div class="cb" style="left:42px;top:24px"></div>
  <svg style="position:absolute;left:43px;top:25px" width="11" height="11"><path d="M2 5.5l2.5 2.5L9.5 2" stroke="#000" stroke-width="1.6" fill="none"/></svg>
  <svg style="position:absolute;left:56px;top:23px" width="15" height="14"><rect x=".5" y=".5" width="14" height="13" fill="#ffff30" stroke="#808030"/><rect x="2.5" y="2.5" width="10" height="9" fill="#fff" stroke="#1a1a9a" stroke-width="1.2"/><path d="M4 10V7.5h2.5V5H9M11 4.5L8.5 7v3" stroke="#1a1a9a" stroke-width="1.3" fill="none"/></svg>
  <div class="t" style="left:77px;top:22px;letter-spacing:-0.21px"><span style="font-size:12px;letter-spacing:0">白水县</span>.shp [1 Features]</div>
  <div class="cb" style="left:42px;top:44px"></div>
  <svg style="position:absolute;left:55px;top:43px" width="15" height="15"><defs><pattern id="chk43" width="2" height="2" patternUnits="userSpaceOnUse"><rect width="2" height="2" fill="#fff"/><rect width="1" height="1" fill="#b8b8c8"/><rect x="1" y="1" width="1" height="1" fill="#b8b8c8"/></pattern></defs><rect x=".5" y=".5" width="14" height="14" fill="#ffff30" stroke="#808030"/><rect x="2" y="2" width="11" height="10" fill="url(#chk43)"/><path d="M2 9l3-3 2.5 3 2.5-3 3 3" stroke="#e02020" stroke-width="1.2" fill="none"/><path d="M2 12l3-3 2.5 3 2.5-3 3 3" stroke="#707020" stroke-width="1.2" fill="none"/></svg>
  <div class="t" style="left:77px;top:42px">dem1.tif</div>
  <div class="cb" style="left:42px;top:64px"></div>
  <svg style="position:absolute;left:55px;top:63px" width="15" height="15"><defs><pattern id="chk63" width="2" height="2" patternUnits="userSpaceOnUse"><rect width="2" height="2" fill="#fff"/><rect width="1" height="1" fill="#b8b8c8"/><rect x="1" y="1" width="1" height="1" fill="#b8b8c8"/></pattern></defs><rect x=".5" y=".5" width="14" height="14" fill="#ffff30" stroke="#808030"/><rect x="2" y="2" width="11" height="10" fill="url(#chk63)"/><path d="M2 9l3-3 2.5 3 2.5-3 3 3" stroke="#e02020" stroke-width="1.2" fill="none"/><path d="M2 12l3-3 2.5 3 2.5-3 3 3" stroke="#707020" stroke-width="1.2" fill="none"/></svg>
  <div style="position:absolute;left:75px;top:60px;width:51px;height:20px;background:#3399ff"></div>
  <div class="t" style="left:77px;top:62px;color:#fff">dem2.tif</div>
</div>
<div id="split"></div>
<div id="map"></div>
<svg style="position:absolute;left:0;top:0" width="1366" height="736">
  <defs>
    <pattern id="hatch" patternUnits="userSpaceOnUse" x="5" y="7" width="8" height="8">
      <path d="M0 0h2v2H0zM4 4h2v2H4zM2 2h1v1H2zM3 3h1v1H3zM6 6h1v1H6zM7 7h1v1H7zM6 3h1v1H6zM7 2h1v1H7zM2 7h1v1H2zM3 6h1v1H3z" fill="#000" shape-rendering="crispEdges"/>
    </pattern>
  </defs>
  <polygon points="801.5,259.2 805.6,266.3 813.7,264.3 834.1,265.3 852.5,269.4 872.8,279.5 893.2,285.7 909.5,293.8 923.8,296.9 938,293.8 952.3,281.6 957.4,282.6 964.5,293.8 964.5,303 961.5,317.3 957.4,331.5 950.3,343.7 946.2,351.9 936,358 929.9,364.1 925.8,378.4 919.4,389.5 918,399 912.6,405.8 907.2,415.3 909.2,420.8 918,419.4 915.3,427.6 916.7,434.3 934.3,441.1 937.1,443.9 931.6,450.7 934.3,456.1 945.2,456.1 950.7,464.2 954.7,474.2 953.7,484.7 963.2,490 968.4,497.4 972.6,505.8 982.1,511.1 972.6,518.4 965.3,526.8 966.3,533.2 977.9,537.4 979,543.7 979,558.4 976.8,571.1 968.4,585.8 960,598.4 955.8,606.8 949.5,612.1 934.7,611.1 928.4,602.6 928.4,593.2 936.8,592.1 937.9,585.8 926.3,586.8 911.6,579.5 900,566.8 903.2,556.3 911.6,547.9 909.5,541.6 894.7,537.4 882.1,535.3 867.4,542.6 863.2,537.4 854.7,533.2 846.3,543.7 844.2,552.1 837.9,557.4 831.6,550 825.3,539.5 819,542.6 806.3,543.7 802.1,537.4 804.2,526.8 791.6,524.7 785.3,519.5 772.6,521.6 760,522.6 749.8,522.1 737.4,521.2 732.1,515.9 728.6,520.3 719.8,523 709.2,526.5 695,533.6 682.7,535.3 675.6,530 676.5,520.3 668.6,517.7 658,521.2 647.4,526.5 636.8,524.7 628,527.4 619.2,522.1 608.6,520.3 601.5,510.6 594.4,500 585.6,496.5 578.5,489.4 570.6,488.6 568,480.6 561.8,472.7 559.1,463 557.4,448.8 552.4,441.5 540,442.4 535.6,438.9 539.1,434.5 548,433.6 556.8,426.5 570.9,419.4 592.1,414.2 602.7,410.6 613.3,410.6 615.9,406.2 620.3,400 630.1,396.5 626.5,387.7 629.2,382.4 638.9,378 639.8,371.8 643.3,370.9 655.7,377.1 664.5,369.1 673.3,363 685.7,356.8 691,361.2 698,356.8 710.4,356.8 714.8,361.2 724.5,355.9 732.5,347.1 740.4,342.7 743.4,337.6 741.4,331.5 740.4,323.4 745.5,318.3 742.4,311.1 742.4,306 748.5,301 747.5,294.8 752.6,285.7 758.7,282.6 763.8,278.5 768.9,270.4 779,265.3 793.4,266.3" fill="url(#hatch)" stroke="#000" stroke-width="7" stroke-linejoin="round"/>
  <polygon points="801.5,259.2 805.6,266.3 813.7,264.3 834.1,265.3 852.5,269.4 872.8,279.5 893.2,285.7 909.5,293.8 923.8,296.9 938,293.8 952.3,281.6 957.4,282.6 964.5,293.8 964.5,303 961.5,317.3 957.4,331.5 950.3,343.7 946.2,351.9 936,358 929.9,364.1 925.8,378.4 919.4,389.5 918,399 912.6,405.8 907.2,415.3 909.2,420.8 918,419.4 915.3,427.6 916.7,434.3 934.3,441.1 937.1,443.9 931.6,450.7 934.3,456.1 945.2,456.1 950.7,464.2 954.7,474.2 953.7,484.7 963.2,490 968.4,497.4 972.6,505.8 982.1,511.1 972.6,518.4 965.3,526.8 966.3,533.2 977.9,537.4 979,543.7 979,558.4 976.8,571.1 968.4,585.8 960,598.4 955.8,606.8 949.5,612.1 934.7,611.1 928.4,602.6 928.4,593.2 936.8,592.1 937.9,585.8 926.3,586.8 911.6,579.5 900,566.8 903.2,556.3 911.6,547.9 909.5,541.6 894.7,537.4 882.1,535.3 867.4,542.6 863.2,537.4 854.7,533.2 846.3,543.7 844.2,552.1 837.9,557.4 831.6,550 825.3,539.5 819,542.6 806.3,543.7 802.1,537.4 804.2,526.8 791.6,524.7 785.3,519.5 772.6,521.6 760,522.6 749.8,522.1 737.4,521.2 732.1,515.9 728.6,520.3 719.8,523 709.2,526.5 695,533.6 682.7,535.3 675.6,530 676.5,520.3 668.6,517.7 658,521.2 647.4,526.5 636.8,524.7 628,527.4 619.2,522.1 608.6,520.3 601.5,510.6 594.4,500 585.6,496.5 578.5,489.4 570.6,488.6 568,480.6 561.8,472.7 559.1,463 557.4,448.8 552.4,441.5 540,442.4 535.6,438.9 539.1,434.5 548,433.6 556.8,426.5 570.9,419.4 592.1,414.2 602.7,410.6 613.3,410.6 615.9,406.2 620.3,400 630.1,396.5 626.5,387.7 629.2,382.4 638.9,378 639.8,371.8 643.3,370.9 655.7,377.1 664.5,369.1 673.3,363 685.7,356.8 691,361.2 698,356.8 710.4,356.8 714.8,361.2 724.5,355.9 732.5,347.1 740.4,342.7 743.4,337.6 741.4,331.5 740.4,323.4 745.5,318.3 742.4,311.1 742.4,306 748.5,301 747.5,294.8 752.6,285.7 758.7,282.6 763.8,278.5 768.9,270.4 779,265.3 793.4,266.3" fill="none" stroke="#5a5af2" stroke-width="2" stroke-dasharray="2.5 1.2 1.5 2.2" stroke-linejoin="round"/>
  <circle cx="805" cy="267" r="2" fill="#f01010"/>
  <rect x="343.5" y="643.5" width="424" height="62" fill="#fff" stroke="#000" stroke-width="1"/>
  <rect x="343" y="704" width="425" height="2" fill="#000"/>
  <path d="M372 661H741" stroke="#000" stroke-width="2"/>
  <path d="M372 653v18M413 653v18M454 653v18M495 653v18M536 653v18M577 653v18M618 653v18M659 653v18M700 653v18M741 653v18" stroke="#000" stroke-width="2"/>
  <g font-family="Liberation Serif" font-size="16" letter-spacing="-0.4" text-anchor="middle" fill="#000">
    <text x="413" y="696">5 km</text><text x="495" y="696">15 km</text><text x="577" y="696">25 km</text><text x="659" y="696">35 km</text><text x="741" y="696">45 km</text>
  </g>
</svg>
<div id="status">
  <span style="left:5px;letter-spacing:0.2px">Right Click to Display Option Menu (1 feature(s) selected)</span>
  <div class="dv" style="left:893px"></div>
  <span style="left:897px;letter-spacing:-0.13px">1:460500</span>
  <div class="dv" style="left:944px"></div>
  <span style="left:949px;letter-spacing:-0.14px">WGS 84 ( 109.1132658535, 35.5113039316 )</span>
  <div class="dv" style="left:1167px"></div>
  <span style="left:1171px;letter-spacing:-0.05px">35° 30' 40.8942" N, 109° 06' 47.7673" E</span>
  <span style="left:1205px;top:-3px;font-size:17px;color:rgba(255,255,255,.55);text-shadow:0 0 1px #888,0 0 1px #888">CSDN @刘一哥GIS</span>
</div>
<div id="taskbar">
  <div style="position:absolute;left:13px;top:0;width:28px;height:8px;border-radius:14px 14px 0 0;background:linear-gradient(#e8eef4,#9ab0c4);border:1px solid #1a3a5a"></div>
  <div style="position:absolute;left:79px;top:2px;width:20px;height:8px;border-radius:10px 10px 0 0;background:#e03a2a"></div>
  <div class="tbtn" style="left:122px;width:58px"><div style="position:absolute;left:14px;top:2px;width:30px;height:6px;background:#fff;border-radius:6px 6px 0 0"></div></div>
  <div class="tbtn" style="left:184px;width:56px"><div style="position:absolute;left:30px;top:1px;border-left:6px solid transparent;border-right:6px solid transparent;border-bottom:7px solid #f4d020"></div></div>
  <div class="tbtn" style="left:245px;width:54px"><div style="position:absolute;left:10px;top:4px;width:22px;height:4px;background:#d8a860"></div></div>
  <div class="tbtn" style="left:307px;width:58px"><div style="position:absolute;left:16px;top:2px;width:24px;height:12px;border-radius:12px;border:2px solid #a0c040;border-right-color:transparent;border-bottom-color:transparent"></div></div>
  <div class="tbtn" style="left:370px;width:58px"><div style="position:absolute;left:14px;top:3px;width:30px;height:5px;background:#1a90f0"></div></div>
  <div style="position:absolute;left:983px;top:2px;width:30px;height:6px;color:#fff;font-size:9px;line-height:9px;font-weight:bold;overflow:hidden">24/3</div>
  <div style="position:absolute;left:1300px;top:2px;width:32px;height:6px;color:#fff;font-size:9px;line-height:9px;font-weight:bold;overflow:hidden">20:10</div>
  <div style="position:absolute;left:1352px;top:0;width:14px;height:8px;background:linear-gradient(#c0d4e4,#8aa6c0);border-left:1px solid #4a6a8a"></div>
</div>
</div>

</body></html>
